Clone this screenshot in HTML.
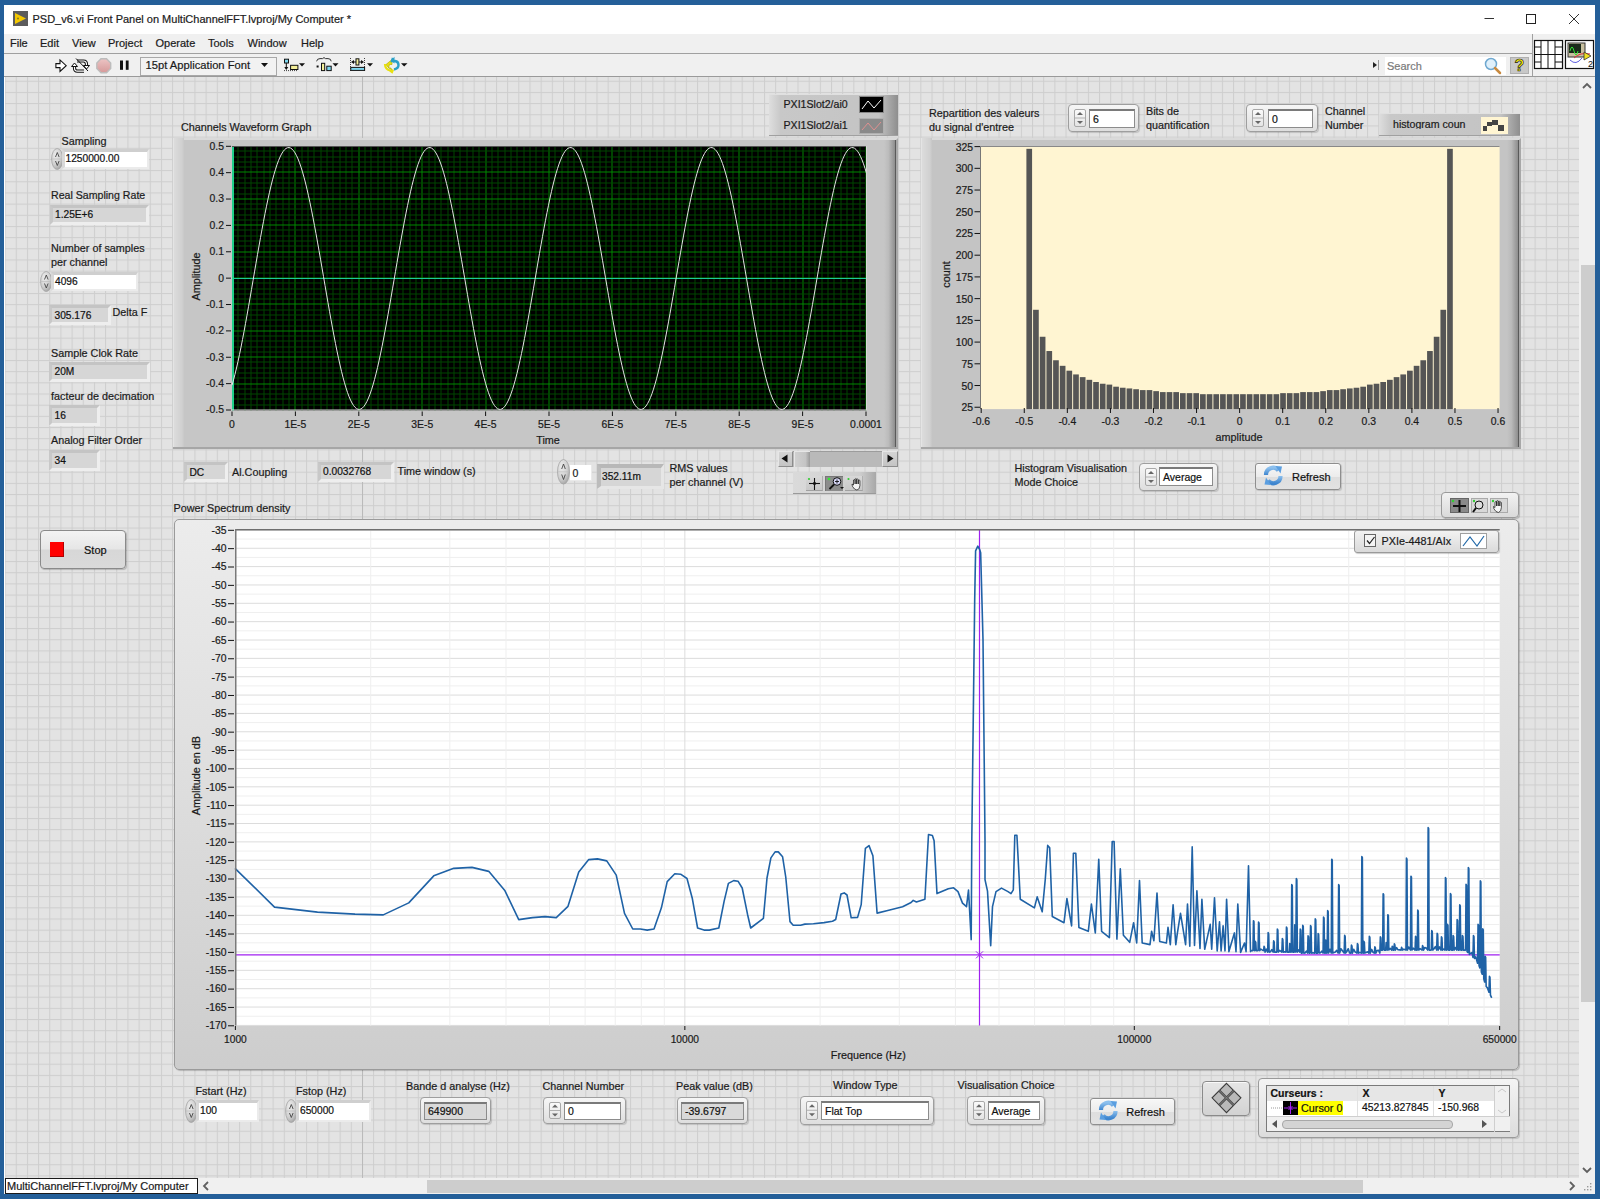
<!DOCTYPE html><html><head><meta charset="utf-8"><style>
html,body{margin:0;padding:0;}
body{width:1600px;height:1199px;overflow:hidden;position:relative;background:#245f99;font-family:"Liberation Sans", sans-serif;}
.t{position:absolute;white-space:nowrap;line-height:1;-webkit-text-stroke:0.2px currentColor;}
.r{position:absolute;box-sizing:border-box;}
svg{position:absolute;overflow:visible;}
</style></head><body>
<div class="r" style="left:4.00px;top:5.00px;width:1591.00px;height:1189.00px;background:#ffffff;"></div>
<div class="r" style="left:13.00px;top:11.00px;width:15.00px;height:15.00px;background:#5c5c5c;"></div>
<svg style="left:13px;top:11px" width="15" height="15"><path d="M2 2 L13 7.5 L2 13 Z" fill="#f4c800"/><circle cx="5" cy="7.5" r="1" fill="#8a7a20"/></svg>
<div class="t" style="left:32.50px;top:13.69px;font-size:11px;color:#202020;">PSD_v6.vi Front Panel on MultiChannelFFT.lvproj/My Computer *</div>
<svg style="left:1480px;top:10px" width="110" height="18"><line x1="4.5" y1="8.5" x2="14" y2="8.5" stroke="#333" stroke-width="1"/><rect x="46.5" y="4.5" width="9" height="9" fill="none" stroke="#222" stroke-width="1"/><line x1="89" y1="4" x2="99" y2="14" stroke="#333" stroke-width="1"/><line x1="99" y1="4" x2="89" y2="14" stroke="#333" stroke-width="1"/></svg>
<div class="r" style="left:4.00px;top:34.00px;width:1591.00px;height:19.00px;background:#f0f0f0;"></div>
<div class="t" style="left:10.00px;top:37.69px;font-size:11px;color:#1a1a1a;">File</div>
<div class="t" style="left:40.00px;top:37.69px;font-size:11px;color:#1a1a1a;">Edit</div>
<div class="t" style="left:72.00px;top:37.69px;font-size:11px;color:#1a1a1a;">View</div>
<div class="t" style="left:108.00px;top:37.69px;font-size:11px;color:#1a1a1a;">Project</div>
<div class="t" style="left:155.50px;top:37.69px;font-size:11px;color:#1a1a1a;">Operate</div>
<div class="t" style="left:208.00px;top:37.69px;font-size:11px;color:#1a1a1a;">Tools</div>
<div class="t" style="left:247.50px;top:37.69px;font-size:11px;color:#1a1a1a;">Window</div>
<div class="t" style="left:301.00px;top:37.69px;font-size:11px;color:#1a1a1a;">Help</div>
<div class="r" style="left:4.00px;top:53.00px;width:1528.00px;height:1.00px;background:#a0a0a0;"></div>
<div class="r" style="left:4.00px;top:54.00px;width:1591.00px;height:22.00px;background:#f0f0f0;"></div>
<div class="r" style="left:1532.00px;top:34.00px;width:1.00px;height:42.00px;background:#a0a0a0;"></div>
<div class="r" style="left:4.00px;top:76.00px;width:1591.00px;height:1.00px;background:#9a9a9a;"></div>
<svg style="left:50px;top:56px" width="82" height="20">
<defs><linearGradient id="stopg" x1="0" y1="0" x2="0" y2="1"><stop offset="0" stop-color="#ecc4c4"/><stop offset="1" stop-color="#d69a9a"/></linearGradient></defs>
<path d="M5.9 7.6 H10 V3.9 L16.2 9.7 L10 15.4 V11.6 H5.9 Z" fill="#fff" stroke="#111" stroke-width="1.1" stroke-linejoin="miter"/>
<path d="M27 5 H33.5 Q36.5 5 36.5 8.5 V9.5" fill="none" stroke="#111" stroke-width="3.2"/>
<path d="M27 5 H33.5 Q36.5 5 36.5 8.5 V9.5" fill="none" stroke="#fff" stroke-width="1.2"/>
<path d="M33.5 9.5 H39.5 L36.5 13 Z" fill="#fff" stroke="#111" stroke-width="1"/>
<path d="M34 15.2 H27.5 Q24.5 15.2 24.5 12 V10.5" fill="none" stroke="#111" stroke-width="3.2"/>
<path d="M34 15.2 H27.5 Q24.5 15.2 24.5 12 V10.5" fill="none" stroke="#fff" stroke-width="1.2"/>
<path d="M21.5 10.5 H27.5 L24.5 7 Z" fill="#fff" stroke="#111" stroke-width="1"/>
<line x1="26" y1="2.5" x2="38" y2="15" stroke="#111" stroke-width="1"/>
<path d="M51 2.8 H56.5 L60.7 7 V12.5 L56.5 16.7 H51 L46.8 12.5 V7 Z" fill="url(#stopg)" stroke="#bdbdbd" stroke-width="1.4"/>
<rect x="70" y="4.5" width="3" height="9.3" fill="#111"/><rect x="75.8" y="4.5" width="2.8" height="9.3" fill="#111"/>
</svg>
<div class="r" style="left:140.00px;top:56.50px;width:137.00px;height:19.00px;background:#f2f2f2;border:1px solid #a8a8a8;"></div>
<div class="t" style="left:145.60px;top:59.72px;font-size:11.2px;color:#1a1a1a;">15pt Application Font</div>
<svg style="left:260px;top:62px" width="10" height="8"><path d="M1 1 h7 l-3.5 4 z" fill="#111"/></svg>
<svg style="left:280px;top:56px" width="130" height="20">
<rect x="4.5" y="3.2" width="4" height="3.8" fill="#7fd8f0" stroke="#111" stroke-width="1"/>
<line x1="6.3" y1="7" x2="6.3" y2="13" stroke="#111" stroke-width="1"/><path d="M4.3 11 L6.3 14 L8.3 11 Z" fill="#111"/>
<rect x="10.6" y="9.3" width="7.3" height="4.2" fill="#f5f09a" stroke="#111" stroke-width="1"/>
<line x1="4" y1="14.6" x2="18" y2="14.6" stroke="#111" stroke-width="0.8" stroke-dasharray="1,1"/>
<path d="M19 7.3 H25 L22 10.6 Z" fill="#111"/>
<path d="M36.6 5.3 Q37 2.6 40 2.6 H42.5 L44 1.6 L45.5 2.6 H48 Q51 2.6 51.2 5.3" fill="none" stroke="#333" stroke-width="1"/>
<rect x="36.6" y="9.5" width="2" height="2" fill="#111"/>
<rect x="41.5" y="7.3" width="3.2" height="7.3" fill="#f5f09a" stroke="#111" stroke-width="1"/>
<rect x="46.8" y="10.2" width="4.4" height="4.4" fill="#7fd8f0" stroke="#111" stroke-width="1"/>
<path d="M52.5 7.3 H58.5 L55.5 10.6 Z" fill="#111"/>
<rect x="76" y="2.8" width="2.9" height="6.2" fill="#f5f09a" stroke="#111" stroke-width="1"/>
<path d="M71 6 L74 4 V8 Z M84 6 L81 4 V8 Z" fill="#111"/><line x1="74" y1="6" x2="76" y2="6" stroke="#111"/><line x1="79" y1="6" x2="81" y2="6" stroke="#111"/>
<line x1="70.5" y1="2" x2="70.5" y2="15" stroke="#111" stroke-width="0.8" stroke-dasharray="1,1"/><line x1="84.5" y1="2" x2="84.5" y2="15" stroke="#111" stroke-width="0.8" stroke-dasharray="1,1"/>
<rect x="70.8" y="11.4" width="13.8" height="3" fill="#7fd8f0" stroke="#111" stroke-width="1"/>
<path d="M87 7.3 H93 L90 10.6 Z" fill="#111"/>
<path d="M112 3.5 L106 8.5 L107 10 L112 14.5 L111 12 H108.5 L109.5 8.5 H112 Z" fill="#e8e010" stroke="#b0a800" stroke-width="0.6"/>
<path d="M105 8 Q105 13 110 14.5 L112 16 L113 13.5" fill="none" stroke="#e8e010" stroke-width="2.2"/>
<path d="M113 2 L112 5 L115 5 Q118.5 5.5 118.5 9 Q118.5 12.5 114 13.5" fill="none" stroke="#2aa0c8" stroke-width="2.4"/>
<path d="M110.8 4.5 L114.5 0.8 V7.5 Z" fill="#2aa0c8"/>
<path d="M121 7.3 H127.5 L124.2 10.6 Z" fill="#111"/>
</svg>
<svg style="left:1372px;top:60px" width="8" height="10"><path d="M1 2 l4 3 l-4 3z" fill="#222"/><line x1="6.5" y1="0" x2="6.5" y2="10" stroke="#999"/></svg>
<div class="r" style="left:1385.00px;top:56.50px;width:121.00px;height:18.00px;background:#ffffff;"></div>
<div class="t" style="left:1387.00px;top:60.69px;font-size:11px;color:#7a7a7a;">Search</div>
<svg style="left:1483px;top:56px" width="20" height="20"><circle cx="8" cy="8" r="5.5" fill="#dff0fb" stroke="#6fa8d0" stroke-width="1.5"/><line x1="12" y1="12" x2="17" y2="17" stroke="#c88a40" stroke-width="2.5" stroke-linecap="round"/></svg>
<div class="r" style="left:1510.00px;top:57.00px;width:19.00px;height:17.00px;background:#c8c8c8;border:1px solid #b0b0b0;"></div>
<div class="t" style="left:1514.50px;top:57.96px;font-size:16px;color:#fff000;font-weight:bold;-webkit-text-stroke:0.7px #222;">?</div>
<svg style="left:1534px;top:40px" width="62" height="30">
<rect x="0.5" y="0.5" width="28" height="28" fill="#fff" stroke="#111" stroke-width="1.2"/>
<line x1="7" y1="0" x2="7" y2="29" stroke="#111"/><line x1="14" y1="0" x2="14" y2="29" stroke="#111"/><line x1="21" y1="0" x2="21" y2="29" stroke="#111"/>
<line x1="0" y1="14.5" x2="29" y2="14.5" stroke="#111"/>
<line x1="0" y1="7" x2="7" y2="7" stroke="#111"/><line x1="0" y1="22" x2="7" y2="22" stroke="#111"/>
<line x1="21" y1="7" x2="29" y2="7" stroke="#111"/><line x1="21" y1="22" x2="29" y2="22" stroke="#111"/>
<rect x="31.5" y="0.5" width="28" height="28" fill="#fff" stroke="#111" stroke-width="1.2"/>
<rect x="34" y="3" width="17" height="14" fill="#c8c0a0" stroke="#333"/>
<rect x="35" y="4" width="12" height="9" fill="#1a2a1a"/>
<path d="M36 11 q2 -8 4 0 q2 8 4 0" fill="none" stroke="#30e030" stroke-width="1"/>
<path d="M36 20 q6 6 12 -2" fill="none" stroke="#6060e0" stroke-width="1"/>
<path d="M40 18 q6 -6 16 -4" fill="none" stroke="#e03030" stroke-width="1"/>
<path d="M50 12 l7 4 l-7 4z" fill="#f0e020" stroke="#333" stroke-width="0.8"/>
<text x="54" y="27" font-size="9" font-family="Liberation Sans" fill="#111">2</text>
</svg>
<svg style="left:5px;top:77px" width="1574" height="1101">
<defs><pattern id="grid" patternUnits="userSpaceOnUse" x="-0.418" y="3.750" width="11.168" height="11.17">
<rect width="11.168" height="11.17" fill="#e3e3e3"/>
<rect x="0" y="0" width="1" height="11.17" fill="#cecece"/>
<rect x="0" y="0" width="11.168" height="1" fill="#cecece"/>
</pattern></defs>
<rect width="1574" height="1101" fill="url(#grid)"/>
<rect x="357" y="0" width="1" height="1101" fill="#bababa"/>
</svg>
<div class="r" style="left:1579.00px;top:77.00px;width:16.00px;height:1101.00px;background:#f0f0f0;"></div>
<div class="r" style="left:1580.50px;top:265.00px;width:14.00px;height:737.00px;background:#cdcdcd;"></div>
<svg style="left:1581px;top:80px" width="12" height="12"><path d="M2 8 l4 -4 l4 4" fill="none" stroke="#606060" stroke-width="1.8"/></svg>
<svg style="left:1581px;top:1164px" width="12" height="12"><path d="M2 4 l4 4 l4 -4" fill="none" stroke="#606060" stroke-width="1.8"/></svg>
<div class="r" style="left:4.00px;top:1178.00px;width:1591.00px;height:16.00px;background:#f0f0f0;"></div>
<div class="r" style="left:427.00px;top:1180.00px;width:935.50px;height:13.00px;background:#cdcdcd;"></div>
<svg style="left:1583px;top:1182px" width="10" height="10"><rect x="7" y="1" width="1.4" height="1.4" fill="#999"/><rect x="4" y="4" width="1.4" height="1.4" fill="#999"/><rect x="7" y="4" width="1.4" height="1.4" fill="#999"/><rect x="1" y="7" width="1.4" height="1.4" fill="#999"/><rect x="4" y="7" width="1.4" height="1.4" fill="#999"/><rect x="7" y="7" width="1.4" height="1.4" fill="#999"/></svg>
<svg style="left:200px;top:1180px" width="12" height="12"><path d="M8 2 l-4 4 l4 4" fill="none" stroke="#606060" stroke-width="1.8"/></svg>
<svg style="left:1566px;top:1180px" width="12" height="12"><path d="M4 2 l4 4 l-4 4" fill="none" stroke="#606060" stroke-width="1.8"/></svg>
<div class="r" style="left:5.00px;top:1178.00px;width:193.00px;height:16.00px;background:#ffffff;border:1px solid #1a1a1a;"></div>
<div class="t" style="left:7.00px;top:1181.19px;font-size:11px;color:#1a1a1a;">MultiChannelFFT.lvproj/My Computer</div>
<div class="r" style="left:173.00px;top:138.00px;width:725.00px;height:311.00px;background:#c6c6c6;border-top:2px solid #dadada;border-bottom:2px solid #a6a6a6;border-right:2px solid #a8a8a8;"></div>
<div class="r" style="left:173.00px;top:138.00px;width:11.00px;height:309.00px;background:linear-gradient(90deg,#dcdcdc,#d0d0d0 80%,#c8c8c8);border-left:1px solid #e4e4e4;"></div>
<div class="r" style="left:884.00px;top:140.00px;width:12.00px;height:307.00px;background:linear-gradient(90deg,#c6c6c6,#bcbcbc 40%,#8e8e8e);border-right:1px solid #5a5a5a;"></div>
<svg style="left:231.5px;top:145.5px" width="635.0" height="264.5"><rect width="635.0" height="264.5" fill="#000"/><line x1="6.00" y1="0" x2="6.00" y2="264.5" stroke="#004600" stroke-width="1"/><line x1="13.00" y1="0" x2="13.00" y2="264.5" stroke="#004600" stroke-width="1"/><line x1="19.00" y1="0" x2="19.00" y2="264.5" stroke="#004600" stroke-width="1"/><line x1="25.00" y1="0" x2="25.00" y2="264.5" stroke="#004600" stroke-width="1"/><line x1="32.00" y1="0" x2="32.00" y2="264.5" stroke="#004600" stroke-width="1"/><line x1="38.00" y1="0" x2="38.00" y2="264.5" stroke="#004600" stroke-width="1"/><line x1="44.00" y1="0" x2="44.00" y2="264.5" stroke="#004600" stroke-width="1"/><line x1="51.00" y1="0" x2="51.00" y2="264.5" stroke="#004600" stroke-width="1"/><line x1="57.00" y1="0" x2="57.00" y2="264.5" stroke="#004600" stroke-width="1"/><line x1="63.00" y1="0" x2="63.00" y2="264.5" stroke="#008800" stroke-width="1"/><line x1="70.00" y1="0" x2="70.00" y2="264.5" stroke="#004600" stroke-width="1"/><line x1="76.00" y1="0" x2="76.00" y2="264.5" stroke="#004600" stroke-width="1"/><line x1="82.00" y1="0" x2="82.00" y2="264.5" stroke="#004600" stroke-width="1"/><line x1="89.00" y1="0" x2="89.00" y2="264.5" stroke="#004600" stroke-width="1"/><line x1="95.00" y1="0" x2="95.00" y2="264.5" stroke="#004600" stroke-width="1"/><line x1="101.00" y1="0" x2="101.00" y2="264.5" stroke="#004600" stroke-width="1"/><line x1="108.00" y1="0" x2="108.00" y2="264.5" stroke="#004600" stroke-width="1"/><line x1="114.00" y1="0" x2="114.00" y2="264.5" stroke="#004600" stroke-width="1"/><line x1="120.00" y1="0" x2="120.00" y2="264.5" stroke="#004600" stroke-width="1"/><line x1="127.00" y1="0" x2="127.00" y2="264.5" stroke="#008800" stroke-width="1"/><line x1="133.00" y1="0" x2="133.00" y2="264.5" stroke="#004600" stroke-width="1"/><line x1="139.00" y1="0" x2="139.00" y2="264.5" stroke="#004600" stroke-width="1"/><line x1="146.00" y1="0" x2="146.00" y2="264.5" stroke="#004600" stroke-width="1"/><line x1="152.00" y1="0" x2="152.00" y2="264.5" stroke="#004600" stroke-width="1"/><line x1="159.00" y1="0" x2="159.00" y2="264.5" stroke="#004600" stroke-width="1"/><line x1="165.00" y1="0" x2="165.00" y2="264.5" stroke="#004600" stroke-width="1"/><line x1="171.00" y1="0" x2="171.00" y2="264.5" stroke="#004600" stroke-width="1"/><line x1="178.00" y1="0" x2="178.00" y2="264.5" stroke="#004600" stroke-width="1"/><line x1="184.00" y1="0" x2="184.00" y2="264.5" stroke="#004600" stroke-width="1"/><line x1="190.00" y1="0" x2="190.00" y2="264.5" stroke="#008800" stroke-width="1"/><line x1="197.00" y1="0" x2="197.00" y2="264.5" stroke="#004600" stroke-width="1"/><line x1="203.00" y1="0" x2="203.00" y2="264.5" stroke="#004600" stroke-width="1"/><line x1="209.00" y1="0" x2="209.00" y2="264.5" stroke="#004600" stroke-width="1"/><line x1="216.00" y1="0" x2="216.00" y2="264.5" stroke="#004600" stroke-width="1"/><line x1="222.00" y1="0" x2="222.00" y2="264.5" stroke="#004600" stroke-width="1"/><line x1="228.00" y1="0" x2="228.00" y2="264.5" stroke="#004600" stroke-width="1"/><line x1="235.00" y1="0" x2="235.00" y2="264.5" stroke="#004600" stroke-width="1"/><line x1="241.00" y1="0" x2="241.00" y2="264.5" stroke="#004600" stroke-width="1"/><line x1="247.00" y1="0" x2="247.00" y2="264.5" stroke="#004600" stroke-width="1"/><line x1="254.00" y1="0" x2="254.00" y2="264.5" stroke="#008800" stroke-width="1"/><line x1="260.00" y1="0" x2="260.00" y2="264.5" stroke="#004600" stroke-width="1"/><line x1="266.00" y1="0" x2="266.00" y2="264.5" stroke="#004600" stroke-width="1"/><line x1="273.00" y1="0" x2="273.00" y2="264.5" stroke="#004600" stroke-width="1"/><line x1="279.00" y1="0" x2="279.00" y2="264.5" stroke="#004600" stroke-width="1"/><line x1="285.00" y1="0" x2="285.00" y2="264.5" stroke="#004600" stroke-width="1"/><line x1="292.00" y1="0" x2="292.00" y2="264.5" stroke="#004600" stroke-width="1"/><line x1="298.00" y1="0" x2="298.00" y2="264.5" stroke="#004600" stroke-width="1"/><line x1="304.00" y1="0" x2="304.00" y2="264.5" stroke="#004600" stroke-width="1"/><line x1="311.00" y1="0" x2="311.00" y2="264.5" stroke="#004600" stroke-width="1"/><line x1="317.00" y1="0" x2="317.00" y2="264.5" stroke="#008800" stroke-width="1"/><line x1="323.00" y1="0" x2="323.00" y2="264.5" stroke="#004600" stroke-width="1"/><line x1="330.00" y1="0" x2="330.00" y2="264.5" stroke="#004600" stroke-width="1"/><line x1="336.00" y1="0" x2="336.00" y2="264.5" stroke="#004600" stroke-width="1"/><line x1="342.00" y1="0" x2="342.00" y2="264.5" stroke="#004600" stroke-width="1"/><line x1="349.00" y1="0" x2="349.00" y2="264.5" stroke="#004600" stroke-width="1"/><line x1="355.00" y1="0" x2="355.00" y2="264.5" stroke="#004600" stroke-width="1"/><line x1="361.00" y1="0" x2="361.00" y2="264.5" stroke="#004600" stroke-width="1"/><line x1="368.00" y1="0" x2="368.00" y2="264.5" stroke="#004600" stroke-width="1"/><line x1="374.00" y1="0" x2="374.00" y2="264.5" stroke="#004600" stroke-width="1"/><line x1="380.00" y1="0" x2="380.00" y2="264.5" stroke="#008800" stroke-width="1"/><line x1="387.00" y1="0" x2="387.00" y2="264.5" stroke="#004600" stroke-width="1"/><line x1="393.00" y1="0" x2="393.00" y2="264.5" stroke="#004600" stroke-width="1"/><line x1="399.00" y1="0" x2="399.00" y2="264.5" stroke="#004600" stroke-width="1"/><line x1="406.00" y1="0" x2="406.00" y2="264.5" stroke="#004600" stroke-width="1"/><line x1="412.00" y1="0" x2="412.00" y2="264.5" stroke="#004600" stroke-width="1"/><line x1="418.00" y1="0" x2="418.00" y2="264.5" stroke="#004600" stroke-width="1"/><line x1="425.00" y1="0" x2="425.00" y2="264.5" stroke="#004600" stroke-width="1"/><line x1="431.00" y1="0" x2="431.00" y2="264.5" stroke="#004600" stroke-width="1"/><line x1="437.00" y1="0" x2="437.00" y2="264.5" stroke="#004600" stroke-width="1"/><line x1="444.00" y1="0" x2="444.00" y2="264.5" stroke="#008800" stroke-width="1"/><line x1="450.00" y1="0" x2="450.00" y2="264.5" stroke="#004600" stroke-width="1"/><line x1="456.00" y1="0" x2="456.00" y2="264.5" stroke="#004600" stroke-width="1"/><line x1="463.00" y1="0" x2="463.00" y2="264.5" stroke="#004600" stroke-width="1"/><line x1="469.00" y1="0" x2="469.00" y2="264.5" stroke="#004600" stroke-width="1"/><line x1="476.00" y1="0" x2="476.00" y2="264.5" stroke="#004600" stroke-width="1"/><line x1="482.00" y1="0" x2="482.00" y2="264.5" stroke="#004600" stroke-width="1"/><line x1="488.00" y1="0" x2="488.00" y2="264.5" stroke="#004600" stroke-width="1"/><line x1="495.00" y1="0" x2="495.00" y2="264.5" stroke="#004600" stroke-width="1"/><line x1="501.00" y1="0" x2="501.00" y2="264.5" stroke="#004600" stroke-width="1"/><line x1="507.00" y1="0" x2="507.00" y2="264.5" stroke="#008800" stroke-width="1"/><line x1="514.00" y1="0" x2="514.00" y2="264.5" stroke="#004600" stroke-width="1"/><line x1="520.00" y1="0" x2="520.00" y2="264.5" stroke="#004600" stroke-width="1"/><line x1="526.00" y1="0" x2="526.00" y2="264.5" stroke="#004600" stroke-width="1"/><line x1="533.00" y1="0" x2="533.00" y2="264.5" stroke="#004600" stroke-width="1"/><line x1="539.00" y1="0" x2="539.00" y2="264.5" stroke="#004600" stroke-width="1"/><line x1="545.00" y1="0" x2="545.00" y2="264.5" stroke="#004600" stroke-width="1"/><line x1="552.00" y1="0" x2="552.00" y2="264.5" stroke="#004600" stroke-width="1"/><line x1="558.00" y1="0" x2="558.00" y2="264.5" stroke="#004600" stroke-width="1"/><line x1="564.00" y1="0" x2="564.00" y2="264.5" stroke="#004600" stroke-width="1"/><line x1="571.00" y1="0" x2="571.00" y2="264.5" stroke="#008800" stroke-width="1"/><line x1="577.00" y1="0" x2="577.00" y2="264.5" stroke="#004600" stroke-width="1"/><line x1="583.00" y1="0" x2="583.00" y2="264.5" stroke="#004600" stroke-width="1"/><line x1="590.00" y1="0" x2="590.00" y2="264.5" stroke="#004600" stroke-width="1"/><line x1="596.00" y1="0" x2="596.00" y2="264.5" stroke="#004600" stroke-width="1"/><line x1="602.00" y1="0" x2="602.00" y2="264.5" stroke="#004600" stroke-width="1"/><line x1="609.00" y1="0" x2="609.00" y2="264.5" stroke="#004600" stroke-width="1"/><line x1="615.00" y1="0" x2="615.00" y2="264.5" stroke="#004600" stroke-width="1"/><line x1="621.00" y1="0" x2="621.00" y2="264.5" stroke="#004600" stroke-width="1"/><line x1="628.00" y1="0" x2="628.00" y2="264.5" stroke="#004600" stroke-width="1"/><line x1="634.00" y1="0" x2="634.00" y2="264.5" stroke="#008800" stroke-width="1"/><line x1="0" y1="5.00" x2="635.0" y2="5.00" stroke="#004600" stroke-width="1"/><line x1="0" y1="11.00" x2="635.0" y2="11.00" stroke="#004600" stroke-width="1"/><line x1="0" y1="16.00" x2="635.0" y2="16.00" stroke="#004600" stroke-width="1"/><line x1="0" y1="21.00" x2="635.0" y2="21.00" stroke="#004600" stroke-width="1"/><line x1="0" y1="26.00" x2="635.0" y2="26.00" stroke="#008800" stroke-width="1"/><line x1="0" y1="32.00" x2="635.0" y2="32.00" stroke="#004600" stroke-width="1"/><line x1="0" y1="37.00" x2="635.0" y2="37.00" stroke="#004600" stroke-width="1"/><line x1="0" y1="42.00" x2="635.0" y2="42.00" stroke="#004600" stroke-width="1"/><line x1="0" y1="48.00" x2="635.0" y2="48.00" stroke="#004600" stroke-width="1"/><line x1="0" y1="53.00" x2="635.0" y2="53.00" stroke="#008800" stroke-width="1"/><line x1="0" y1="58.00" x2="635.0" y2="58.00" stroke="#004600" stroke-width="1"/><line x1="0" y1="63.00" x2="635.0" y2="63.00" stroke="#004600" stroke-width="1"/><line x1="0" y1="69.00" x2="635.0" y2="69.00" stroke="#004600" stroke-width="1"/><line x1="0" y1="74.00" x2="635.0" y2="74.00" stroke="#004600" stroke-width="1"/><line x1="0" y1="79.00" x2="635.0" y2="79.00" stroke="#008800" stroke-width="1"/><line x1="0" y1="84.00" x2="635.0" y2="84.00" stroke="#004600" stroke-width="1"/><line x1="0" y1="90.00" x2="635.0" y2="90.00" stroke="#004600" stroke-width="1"/><line x1="0" y1="95.00" x2="635.0" y2="95.00" stroke="#004600" stroke-width="1"/><line x1="0" y1="100.00" x2="635.0" y2="100.00" stroke="#004600" stroke-width="1"/><line x1="0" y1="106.00" x2="635.0" y2="106.00" stroke="#008800" stroke-width="1"/><line x1="0" y1="111.00" x2="635.0" y2="111.00" stroke="#004600" stroke-width="1"/><line x1="0" y1="116.00" x2="635.0" y2="116.00" stroke="#004600" stroke-width="1"/><line x1="0" y1="121.00" x2="635.0" y2="121.00" stroke="#004600" stroke-width="1"/><line x1="0" y1="127.00" x2="635.0" y2="127.00" stroke="#004600" stroke-width="1"/><line x1="0" y1="132.00" x2="635.0" y2="132.00" stroke="#008800" stroke-width="1"/><line x1="0" y1="137.00" x2="635.0" y2="137.00" stroke="#004600" stroke-width="1"/><line x1="0" y1="143.00" x2="635.0" y2="143.00" stroke="#004600" stroke-width="1"/><line x1="0" y1="148.00" x2="635.0" y2="148.00" stroke="#004600" stroke-width="1"/><line x1="0" y1="153.00" x2="635.0" y2="153.00" stroke="#004600" stroke-width="1"/><line x1="0" y1="158.00" x2="635.0" y2="158.00" stroke="#008800" stroke-width="1"/><line x1="0" y1="164.00" x2="635.0" y2="164.00" stroke="#004600" stroke-width="1"/><line x1="0" y1="169.00" x2="635.0" y2="169.00" stroke="#004600" stroke-width="1"/><line x1="0" y1="174.00" x2="635.0" y2="174.00" stroke="#004600" stroke-width="1"/><line x1="0" y1="180.00" x2="635.0" y2="180.00" stroke="#004600" stroke-width="1"/><line x1="0" y1="185.00" x2="635.0" y2="185.00" stroke="#008800" stroke-width="1"/><line x1="0" y1="190.00" x2="635.0" y2="190.00" stroke="#004600" stroke-width="1"/><line x1="0" y1="195.00" x2="635.0" y2="195.00" stroke="#004600" stroke-width="1"/><line x1="0" y1="201.00" x2="635.0" y2="201.00" stroke="#004600" stroke-width="1"/><line x1="0" y1="206.00" x2="635.0" y2="206.00" stroke="#004600" stroke-width="1"/><line x1="0" y1="211.00" x2="635.0" y2="211.00" stroke="#008800" stroke-width="1"/><line x1="0" y1="216.00" x2="635.0" y2="216.00" stroke="#004600" stroke-width="1"/><line x1="0" y1="222.00" x2="635.0" y2="222.00" stroke="#004600" stroke-width="1"/><line x1="0" y1="227.00" x2="635.0" y2="227.00" stroke="#004600" stroke-width="1"/><line x1="0" y1="232.00" x2="635.0" y2="232.00" stroke="#004600" stroke-width="1"/><line x1="0" y1="238.00" x2="635.0" y2="238.00" stroke="#008800" stroke-width="1"/><line x1="0" y1="243.00" x2="635.0" y2="243.00" stroke="#004600" stroke-width="1"/><line x1="0" y1="248.00" x2="635.0" y2="248.00" stroke="#004600" stroke-width="1"/><line x1="0" y1="253.00" x2="635.0" y2="253.00" stroke="#004600" stroke-width="1"/><line x1="0" y1="259.00" x2="635.0" y2="259.00" stroke="#004600" stroke-width="1"/><line x1="0" y1="132.50" x2="635.0" y2="132.50" stroke="#1fc89a" stroke-width="1.2"/><line x1="1" y1="0" x2="1" y2="264.5" stroke="#1fd08a" stroke-width="2"/><polyline points="0.00,239.25 1.50,233.95 3.00,228.19 4.50,222.00 6.00,215.41 7.50,208.45 9.00,201.15 10.50,193.54 12.00,185.66 13.50,177.54 15.00,169.23 16.50,160.74 18.00,152.13 19.50,143.44 21.00,134.69 22.50,125.93 24.00,117.21 25.50,108.55 27.00,100.00 28.50,91.59 30.00,83.37 31.50,75.37 33.00,67.62 34.50,60.16 36.00,53.03 37.50,46.25 39.00,39.86 40.50,33.88 42.00,28.34 43.50,23.27 45.00,18.69 46.50,14.61 48.00,11.07 49.50,8.06 51.00,5.62 52.50,3.74 54.00,2.44 55.50,1.71 57.00,1.58 58.50,2.03 60.00,3.06 61.50,4.67 63.00,6.85 64.50,9.60 66.00,12.89 67.50,16.72 69.00,21.07 70.50,25.92 72.00,31.24 73.50,37.01 75.00,43.22 76.50,49.82 78.00,56.79 79.50,64.10 81.00,71.72 82.50,79.61 84.00,87.73 85.50,96.05 87.00,104.54 88.50,113.16 90.00,121.86 91.50,130.60 93.00,139.36 94.50,148.08 96.00,156.74 97.50,165.28 99.00,173.69 100.50,181.90 102.00,189.90 103.50,197.63 105.00,205.08 106.50,212.20 108.00,218.97 109.50,225.35 111.00,231.31 112.50,236.83 114.00,241.89 115.50,246.46 117.00,250.51 118.50,254.04 120.00,257.03 121.50,259.45 123.00,261.31 124.50,262.60 126.00,263.30 127.50,263.42 129.00,262.95 130.50,261.90 132.00,260.27 133.50,258.06 135.00,255.30 136.50,251.99 138.00,248.14 139.50,243.78 141.00,238.91 142.50,233.58 144.00,227.79 145.50,221.57 147.00,214.95 148.50,207.97 150.00,200.65 151.50,193.02 153.00,185.13 154.50,177.00 156.00,168.66 157.50,160.17 159.00,151.56 160.50,142.85 162.00,134.11 163.50,125.35 165.00,116.63 166.50,107.98 168.00,99.43 169.50,91.04 171.00,82.83 172.50,74.84 174.00,67.11 175.50,59.68 177.00,52.56 178.50,45.81 180.00,39.45 181.50,33.50 183.00,27.99 184.50,22.95 186.00,18.40 187.50,14.36 189.00,10.85 190.50,7.88 192.00,5.47 193.50,3.63 195.00,2.37 196.50,1.69 198.00,1.59 199.50,2.08 201.00,3.15 202.50,4.80 204.00,7.02 205.50,9.80 207.00,13.13 208.50,17.00 210.00,21.38 211.50,26.26 213.00,31.61 214.50,37.41 216.00,43.64 217.50,50.27 219.00,57.27 220.50,64.60 222.00,72.23 223.50,80.14 225.00,88.28 226.50,96.62 228.00,105.11 229.50,113.73 231.00,122.44 232.50,131.19 234.00,139.94 235.50,148.66 237.00,157.31 238.50,165.85 240.00,174.24 241.50,182.44 243.00,190.42 244.50,198.14 246.00,205.57 247.50,212.67 249.00,219.41 250.50,225.76 252.00,231.70 253.50,237.19 255.00,242.21 256.50,246.74 258.00,250.76 259.50,254.26 261.00,257.21 262.50,259.60 264.00,261.42 265.50,262.66 267.00,263.33 268.50,263.40 270.00,262.90 271.50,261.81 273.00,260.14 274.50,257.90 276.00,255.10 277.50,251.75 279.00,247.87 280.50,243.47 282.00,238.57 283.50,233.20 285.00,227.38 286.50,221.14 288.00,214.50 289.50,207.49 291.00,200.15 292.50,192.51 294.00,184.59 295.50,176.45 297.00,168.10 298.50,159.60 300.00,150.98 301.50,142.27 303.00,133.52 304.50,124.77 306.00,116.05 307.50,107.40 309.00,98.87 310.50,90.48 312.00,82.29 313.50,74.32 315.00,66.61 316.50,59.19 318.00,52.10 319.50,45.37 321.00,39.04 322.50,33.11 324.00,27.64 325.50,22.63 327.00,18.11 328.50,14.11 330.00,10.64 331.50,7.71 333.00,5.33 334.50,3.53 336.00,2.31 337.50,1.66 339.00,1.60 340.50,2.13 342.00,3.24 343.50,4.93 345.00,7.19 346.50,10.01 348.00,13.37 349.50,17.27 351.00,21.69 352.50,26.60 354.00,31.98 355.50,37.82 357.00,44.07 358.50,50.73 360.00,57.75 361.50,65.10 363.00,72.75 364.50,80.68 366.00,88.83 367.50,97.18 369.00,105.68 370.50,114.31 372.00,123.02 373.50,131.77 375.00,140.52 376.50,149.24 378.00,157.88 379.50,166.41 381.00,174.79 382.50,182.98 384.00,190.94 385.50,198.65 387.00,206.05 388.50,213.13 390.00,219.84 391.50,226.17 393.00,232.08 394.50,237.54 396.00,242.53 397.50,247.03 399.00,251.01 400.50,254.47 402.00,257.38 403.50,259.74 405.00,261.52 406.50,262.73 408.00,263.35 409.50,263.39 411.00,262.84 412.50,261.71 414.00,260.01 415.50,257.73 417.00,254.89 418.50,251.51 420.00,247.59 421.50,243.16 423.00,238.23 424.50,232.83 426.00,226.98 427.50,220.71 429.00,214.04 430.50,207.01 432.00,199.65 433.50,191.99 435.00,184.06 436.50,175.90 438.00,167.54 439.50,159.03 441.00,150.40 442.50,141.69 444.00,132.94 445.50,124.18 447.00,115.47 448.50,106.83 450.00,98.30 451.50,89.93 453.00,81.75 454.50,73.80 456.00,66.10 457.50,58.71 459.00,51.64 460.50,44.94 462.00,38.63 463.50,32.74 465.00,27.29 466.50,22.31 468.00,17.83 469.50,13.86 471.00,10.42 472.50,7.53 474.00,5.20 475.50,3.43 477.00,2.24 478.50,1.64 480.00,1.62 481.50,2.19 483.00,3.33 484.50,5.06 486.00,7.36 487.50,10.21 489.00,13.62 490.50,17.55 492.00,22.00 493.50,26.94 495.00,32.36 496.50,38.22 498.00,44.51 499.50,51.18 501.00,58.23 502.50,65.60 504.00,73.27 505.50,81.21 507.00,89.38 508.50,97.74 510.00,106.26 511.50,114.89 513.00,123.60 514.50,132.35 516.00,141.11 517.50,149.82 519.00,158.46 520.50,166.98 522.00,175.34 523.50,183.52 525.00,191.47 526.50,199.15 528.00,206.53 529.50,213.59 531.00,220.28 532.50,226.58 534.00,232.45 535.50,237.88 537.00,242.84 538.50,247.31 540.00,251.26 541.50,254.68 543.00,257.56 544.50,259.87 546.00,261.62 547.50,262.79 549.00,263.37 550.50,263.37 552.00,262.79 553.50,261.62 555.00,259.87 556.50,257.56 558.00,254.68 559.50,251.26 561.00,247.31 562.50,242.84 564.00,237.88 565.50,232.45 567.00,226.58 568.50,220.28 570.00,213.59 571.50,206.53 573.00,199.15 574.50,191.47 576.00,183.52 577.50,175.34 579.00,166.98 580.50,158.46 582.00,149.82 583.50,141.11 585.00,132.35 586.50,123.60 588.00,114.89 589.50,106.26 591.00,97.74 592.50,89.38 594.00,81.21 595.50,73.27 597.00,65.60 598.50,58.23 600.00,51.18 601.50,44.51 603.00,38.22 604.50,32.36 606.00,26.94 607.50,22.00 609.00,17.55 610.50,13.62 612.00,10.21 613.50,7.36 615.00,5.06 616.50,3.33 618.00,2.19 619.50,1.62 621.00,1.64 622.50,2.24 624.00,3.43 625.50,5.20 627.00,7.53 628.50,10.42 630.00,13.86 631.50,17.83 633.00,22.31 634.50,27.29" fill="none" stroke="#e4e4e4" stroke-width="1.0"/><line x1="0" y1="0.5" x2="635.0" y2="0.5" stroke="#555" stroke-width="1"/><line x1="634.5" y1="0" x2="634.5" y2="264.5" stroke="#d8d8d8" stroke-width="1"/><line x1="0" y1="264.0" x2="635.0" y2="264.0" stroke="#d8d8d8" stroke-width="1"/></svg>
<div class="t" style="left:224.00px;top:141.70px;font-size:10.4px;color:#1a1a1a;transform:translateX(-100%);">0.5</div>
<div class="t" style="left:224.00px;top:168.07px;font-size:10.4px;color:#1a1a1a;transform:translateX(-100%);">0.4</div>
<div class="t" style="left:224.00px;top:194.44px;font-size:10.4px;color:#1a1a1a;transform:translateX(-100%);">0.3</div>
<div class="t" style="left:224.00px;top:220.81px;font-size:10.4px;color:#1a1a1a;transform:translateX(-100%);">0.2</div>
<div class="t" style="left:224.00px;top:247.18px;font-size:10.4px;color:#1a1a1a;transform:translateX(-100%);">0.1</div>
<div class="t" style="left:224.00px;top:273.55px;font-size:10.4px;color:#1a1a1a;transform:translateX(-100%);">0</div>
<div class="t" style="left:224.00px;top:299.92px;font-size:10.4px;color:#1a1a1a;transform:translateX(-100%);">-0.1</div>
<div class="t" style="left:224.00px;top:326.29px;font-size:10.4px;color:#1a1a1a;transform:translateX(-100%);">-0.2</div>
<div class="t" style="left:224.00px;top:352.66px;font-size:10.4px;color:#1a1a1a;transform:translateX(-100%);">-0.3</div>
<div class="t" style="left:224.00px;top:379.03px;font-size:10.4px;color:#1a1a1a;transform:translateX(-100%);">-0.4</div>
<div class="t" style="left:224.00px;top:405.40px;font-size:10.4px;color:#1a1a1a;transform:translateX(-100%);">-0.5</div>
<div class="t" style="left:232.00px;top:420.00px;font-size:10.4px;color:#1a1a1a;transform:translateX(-50%);">0</div>
<div class="t" style="left:295.40px;top:420.00px;font-size:10.4px;color:#1a1a1a;transform:translateX(-50%);">1E-5</div>
<div class="t" style="left:358.80px;top:420.00px;font-size:10.4px;color:#1a1a1a;transform:translateX(-50%);">2E-5</div>
<div class="t" style="left:422.20px;top:420.00px;font-size:10.4px;color:#1a1a1a;transform:translateX(-50%);">3E-5</div>
<div class="t" style="left:485.60px;top:420.00px;font-size:10.4px;color:#1a1a1a;transform:translateX(-50%);">4E-5</div>
<div class="t" style="left:549.00px;top:420.00px;font-size:10.4px;color:#1a1a1a;transform:translateX(-50%);">5E-5</div>
<div class="t" style="left:612.40px;top:420.00px;font-size:10.4px;color:#1a1a1a;transform:translateX(-50%);">6E-5</div>
<div class="t" style="left:675.80px;top:420.00px;font-size:10.4px;color:#1a1a1a;transform:translateX(-50%);">7E-5</div>
<div class="t" style="left:739.20px;top:420.00px;font-size:10.4px;color:#1a1a1a;transform:translateX(-50%);">8E-5</div>
<div class="t" style="left:802.60px;top:420.00px;font-size:10.4px;color:#1a1a1a;transform:translateX(-50%);">9E-5</div>
<div class="t" style="left:866.00px;top:420.00px;font-size:10.4px;color:#1a1a1a;transform:translateX(-50%);">0.0001</div>
<svg style="left:0;top:0" width="1" height="1"><line x1="226" y1="146.30" x2="231" y2="146.30" stroke="#111" stroke-width="1"/><line x1="226" y1="172.67" x2="231" y2="172.67" stroke="#111" stroke-width="1"/><line x1="226" y1="199.04" x2="231" y2="199.04" stroke="#111" stroke-width="1"/><line x1="226" y1="225.41" x2="231" y2="225.41" stroke="#111" stroke-width="1"/><line x1="226" y1="251.78" x2="231" y2="251.78" stroke="#111" stroke-width="1"/><line x1="226" y1="278.15" x2="231" y2="278.15" stroke="#111" stroke-width="1"/><line x1="226" y1="304.52" x2="231" y2="304.52" stroke="#111" stroke-width="1"/><line x1="226" y1="330.89" x2="231" y2="330.89" stroke="#111" stroke-width="1"/><line x1="226" y1="357.26" x2="231" y2="357.26" stroke="#111" stroke-width="1"/><line x1="226" y1="383.63" x2="231" y2="383.63" stroke="#111" stroke-width="1"/><line x1="226" y1="410.00" x2="231" y2="410.00" stroke="#111" stroke-width="1"/><line x1="232.00" y1="411.5" x2="232.00" y2="416" stroke="#111" stroke-width="1"/><line x1="295.40" y1="411.5" x2="295.40" y2="416" stroke="#111" stroke-width="1"/><line x1="358.80" y1="411.5" x2="358.80" y2="416" stroke="#111" stroke-width="1"/><line x1="422.20" y1="411.5" x2="422.20" y2="416" stroke="#111" stroke-width="1"/><line x1="485.60" y1="411.5" x2="485.60" y2="416" stroke="#111" stroke-width="1"/><line x1="549.00" y1="411.5" x2="549.00" y2="416" stroke="#111" stroke-width="1"/><line x1="612.40" y1="411.5" x2="612.40" y2="416" stroke="#111" stroke-width="1"/><line x1="675.80" y1="411.5" x2="675.80" y2="416" stroke="#111" stroke-width="1"/><line x1="739.20" y1="411.5" x2="739.20" y2="416" stroke="#111" stroke-width="1"/><line x1="802.60" y1="411.5" x2="802.60" y2="416" stroke="#111" stroke-width="1"/><line x1="866.00" y1="411.5" x2="866.00" y2="416" stroke="#111" stroke-width="1"/></svg>
<div class="t" style="left:548.00px;top:435.36px;font-size:10.8px;color:#1a1a1a;transform:translateX(-50%);">Time</div>
<div class="t" style="left:199.00px;top:268.86px;font-size:10.8px;color:#1a1a1a;transform:translate(-50%,0) rotate(-90deg);transform-origin:50% 70%;">Amplitude</div>
<div class="t" style="left:181.00px;top:121.86px;font-size:10.8px;color:#1b1b1b;">Channels Waveform Graph</div>
<div class="r" style="left:769.00px;top:94.00px;width:129.00px;height:42.00px;background:linear-gradient(90deg,#dedede,#c8c8c8 9%,#c4c4c4 85%,#8e8e8e);border-top:1px solid #e0e0e0;border-bottom:1px solid #a0a0a0;"></div>
<div class="t" style="left:783.50px;top:98.53px;font-size:10.6px;color:#1a1a1a;">PXI1Slot2/ai0</div>
<div class="t" style="left:783.50px;top:120.03px;font-size:10.6px;color:#1a1a1a;">PXI1Slot2/ai1</div>
<div class="r" style="left:859.00px;top:96.00px;width:25.00px;height:17.00px;background:#000;border:1px solid #888;"></div>
<svg style="left:859px;top:96px" width="25" height="17"><path d="M3 13 L9 5 L15 12 L22 4" fill="none" stroke="#fff" stroke-width="1"/></svg>
<div class="r" style="left:859.00px;top:118.00px;width:25.00px;height:16.00px;background:#8a8a8a;border:1px solid #b0b0b0;"></div>
<svg style="left:859px;top:118px" width="25" height="16"><path d="M3 12 L9 5 L15 12 L22 4" fill="none" stroke="#e09090" stroke-width="1"/></svg>
<div class="r" style="left:778.00px;top:451.00px;width:119.00px;height:15.50px;background:#b9b9b9;border-top:1px solid #9c9c9c;"></div>
<div class="r" style="left:778.00px;top:451.00px;width:15.00px;height:15.50px;background:linear-gradient(#d4d4d4,#c4c4c4);border-top:1px solid #e6e6e6;border-left:1px solid #e6e6e6;border-bottom:1px solid #8c8c8c;border-right:1px solid #8c8c8c;"></div>
<div class="r" style="left:793.50px;top:451.00px;width:16.00px;height:15.50px;background:linear-gradient(90deg,#d0d0d0,#c4c4c4 70%,#9a9a9a);border-top:1px solid #e6e6e6;border-left:1px solid #e6e6e6;"></div>
<div class="r" style="left:882.00px;top:451.00px;width:15.50px;height:15.50px;background:linear-gradient(#d4d4d4,#c4c4c4);border-top:1px solid #e6e6e6;border-left:1px solid #e6e6e6;border-bottom:1px solid #8c8c8c;border-right:1px solid #8c8c8c;"></div>
<svg style="left:778px;top:451px" width="120" height="15"><path d="M9.5 3.5 l-6 4 l6 4z" fill="#111"/><path d="M109.5 3.5 l6 4 l-6 4z" fill="#111"/></svg>
<div class="r" style="left:793.00px;top:472.20px;width:83.00px;height:21.60px;background:linear-gradient(90deg,#dadada,#cfcfcf 80%,#a8a8a8);border-bottom:1px solid #9a9a9a;"></div>
<div class="r" style="left:806.00px;top:476.00px;width:17.00px;height:14.50px;background:linear-gradient(#d8d8d8,#c8c8c8);border-bottom:1px solid #a0a0a0;border-right:1px solid #b0b0b0;"></div>
<div class="r" style="left:825.00px;top:476.00px;width:18.00px;height:14.50px;background:#8c8c8c;border-top:1px solid #777;border-left:1px solid #777;"></div>
<div class="r" style="left:845.40px;top:476.00px;width:17.60px;height:14.50px;background:linear-gradient(#d8d8d8,#c8c8c8);border-bottom:1px solid #a0a0a0;border-right:1px solid #b0b0b0;"></div>
<svg style="left:806px;top:476px" width="60" height="16"><line x1="3" y1="7.5" x2="14" y2="7.5" stroke="#111" stroke-width="1.1"/><line x1="8.5" y1="2" x2="8.5" y2="14" stroke="#111" stroke-width="1.1"/><circle cx="8.5" cy="7.5" r="1.3" fill="none" stroke="#111" stroke-width="0.8"/><circle cx="3" cy="3" r="1.1" fill="#3c3"/><circle cx="31" cy="5.5" r="3.8" fill="#d8d8f8" stroke="#111" stroke-width="1"/><path d="M29 5.5 h4 M31 3.5 v4" stroke="#111" stroke-width="0.9"/><line x1="28" y1="8.5" x2="23.5" y2="13" stroke="#111" stroke-width="1.8"/><path d="M34 11 h4 l-2 2z" fill="#111"/><circle cx="23" cy="3" r="1.3" fill="#3e3"/><path d="M48.5 13 q-3 -3 -2.5 -5 l1.5 1 v-5 q0.8 -1 1.6 0 v4 v-5 q0.8 -1 1.6 0 v5 v-4.5 q0.8 -1 1.6 0 v4.5 v-3.5 q0.8 -1 1.6 0 v5 q0 4 -3 4.5z" fill="#f4f4f4" stroke="#111" stroke-width="0.7"/><circle cx="42.5" cy="3" r="1.1" fill="#3c3"/></svg>
<div class="r" style="left:921.00px;top:138.00px;width:600.00px;height:311.00px;background:#c4c4c4;border-top:2px solid #dadada;border-bottom:2px solid #a6a6a6;border-right:2px solid #a8a8a8;"></div>
<div class="r" style="left:921.00px;top:138.00px;width:11.00px;height:309.00px;background:linear-gradient(90deg,#dcdcdc,#d0d0d0 80%,#c6c6c6);border-left:1px solid #e4e4e4;"></div>
<div class="r" style="left:1507.00px;top:140.00px;width:12.00px;height:307.00px;background:linear-gradient(90deg,#c4c4c4,#bababa 40%,#8e8e8e);border-right:1px solid #5a5a5a;"></div>
<svg style="left:980.0px;top:145.6px" width="519.5999999999999" height="263.1"><rect width="519.5999999999999" height="263.1" fill="#fff5d2"/><rect x="46.40" y="2.84" width="5.68" height="260.26" fill="#555555"/><rect x="53.08" y="163.79" width="5.68" height="99.31" fill="#555555"/><rect x="59.76" y="190.76" width="5.68" height="72.34" fill="#555555"/><rect x="66.43" y="205.03" width="5.68" height="58.07" fill="#555555"/><rect x="73.11" y="214.25" width="5.68" height="48.85" fill="#555555"/><rect x="79.79" y="219.82" width="5.68" height="43.28" fill="#555555"/><rect x="86.47" y="224.69" width="5.68" height="38.41" fill="#555555"/><rect x="93.15" y="228.43" width="5.68" height="34.67" fill="#555555"/><rect x="99.83" y="231.13" width="5.68" height="31.97" fill="#555555"/><rect x="106.50" y="233.83" width="5.68" height="29.27" fill="#555555"/><rect x="113.18" y="236.00" width="5.68" height="27.10" fill="#555555"/><rect x="119.86" y="237.74" width="5.68" height="25.36" fill="#555555"/><rect x="126.54" y="238.61" width="5.68" height="24.49" fill="#555555"/><rect x="133.22" y="240.70" width="5.68" height="22.40" fill="#555555"/><rect x="139.89" y="241.74" width="5.68" height="21.36" fill="#555555"/><rect x="146.57" y="242.44" width="5.68" height="20.66" fill="#555555"/><rect x="153.25" y="243.22" width="5.68" height="19.88" fill="#555555"/><rect x="159.93" y="244.09" width="5.68" height="19.01" fill="#555555"/><rect x="166.61" y="244.09" width="5.68" height="19.01" fill="#555555"/><rect x="173.28" y="245.14" width="5.68" height="17.96" fill="#555555"/><rect x="179.96" y="246.09" width="5.68" height="17.01" fill="#555555"/><rect x="186.64" y="246.09" width="5.68" height="17.01" fill="#555555"/><rect x="193.32" y="246.09" width="5.68" height="17.01" fill="#555555"/><rect x="200.00" y="247.14" width="5.68" height="15.96" fill="#555555"/><rect x="206.67" y="247.14" width="5.68" height="15.96" fill="#555555"/><rect x="213.35" y="247.14" width="5.68" height="15.96" fill="#555555"/><rect x="220.03" y="248.18" width="5.68" height="14.92" fill="#555555"/><rect x="226.71" y="248.18" width="5.68" height="14.92" fill="#555555"/><rect x="233.39" y="248.18" width="5.68" height="14.92" fill="#555555"/><rect x="240.07" y="248.18" width="5.68" height="14.92" fill="#555555"/><rect x="246.74" y="248.18" width="5.68" height="14.92" fill="#555555"/><rect x="253.42" y="248.18" width="5.68" height="14.92" fill="#555555"/><rect x="260.10" y="248.18" width="5.68" height="14.92" fill="#555555"/><rect x="266.78" y="248.18" width="5.68" height="14.92" fill="#555555"/><rect x="273.46" y="248.18" width="5.68" height="14.92" fill="#555555"/><rect x="280.13" y="248.18" width="5.68" height="14.92" fill="#555555"/><rect x="286.81" y="248.18" width="5.68" height="14.92" fill="#555555"/><rect x="293.49" y="248.18" width="5.68" height="14.92" fill="#555555"/><rect x="300.17" y="247.14" width="5.68" height="15.96" fill="#555555"/><rect x="306.85" y="247.14" width="5.68" height="15.96" fill="#555555"/><rect x="313.53" y="247.14" width="5.68" height="15.96" fill="#555555"/><rect x="320.20" y="246.09" width="5.68" height="17.01" fill="#555555"/><rect x="326.88" y="246.09" width="5.68" height="17.01" fill="#555555"/><rect x="333.56" y="246.09" width="5.68" height="17.01" fill="#555555"/><rect x="340.24" y="245.14" width="5.68" height="17.96" fill="#555555"/><rect x="346.92" y="244.09" width="5.68" height="19.01" fill="#555555"/><rect x="353.59" y="244.09" width="5.68" height="19.01" fill="#555555"/><rect x="360.27" y="243.22" width="5.68" height="19.88" fill="#555555"/><rect x="366.95" y="242.44" width="5.68" height="20.66" fill="#555555"/><rect x="373.63" y="241.74" width="5.68" height="21.36" fill="#555555"/><rect x="380.31" y="240.70" width="5.68" height="22.40" fill="#555555"/><rect x="386.98" y="238.61" width="5.68" height="24.49" fill="#555555"/><rect x="393.66" y="237.74" width="5.68" height="25.36" fill="#555555"/><rect x="400.34" y="236.00" width="5.68" height="27.10" fill="#555555"/><rect x="407.02" y="233.83" width="5.68" height="29.27" fill="#555555"/><rect x="413.70" y="231.13" width="5.68" height="31.97" fill="#555555"/><rect x="420.38" y="228.43" width="5.68" height="34.67" fill="#555555"/><rect x="427.05" y="224.69" width="5.68" height="38.41" fill="#555555"/><rect x="433.73" y="219.82" width="5.68" height="43.28" fill="#555555"/><rect x="440.41" y="214.25" width="5.68" height="48.85" fill="#555555"/><rect x="447.09" y="205.03" width="5.68" height="58.07" fill="#555555"/><rect x="453.77" y="190.76" width="5.68" height="72.34" fill="#555555"/><rect x="460.44" y="163.79" width="5.68" height="99.31" fill="#555555"/><rect x="467.12" y="2.84" width="5.68" height="260.26" fill="#555555"/><line x1="0.5" y1="0" x2="0.5" y2="263.1" stroke="#777"/><line x1="0" y1="0.5" x2="519.5999999999999" y2="0.5" stroke="#888"/></svg>
<div class="t" style="left:973.00px;top:142.60px;font-size:10.4px;color:#1a1a1a;transform:translateX(-100%);">325</div>
<div class="t" style="left:973.00px;top:164.32px;font-size:10.4px;color:#1a1a1a;transform:translateX(-100%);">300</div>
<div class="t" style="left:973.00px;top:186.04px;font-size:10.4px;color:#1a1a1a;transform:translateX(-100%);">275</div>
<div class="t" style="left:973.00px;top:207.76px;font-size:10.4px;color:#1a1a1a;transform:translateX(-100%);">250</div>
<div class="t" style="left:973.00px;top:229.48px;font-size:10.4px;color:#1a1a1a;transform:translateX(-100%);">225</div>
<div class="t" style="left:973.00px;top:251.20px;font-size:10.4px;color:#1a1a1a;transform:translateX(-100%);">200</div>
<div class="t" style="left:973.00px;top:272.92px;font-size:10.4px;color:#1a1a1a;transform:translateX(-100%);">175</div>
<div class="t" style="left:973.00px;top:294.64px;font-size:10.4px;color:#1a1a1a;transform:translateX(-100%);">150</div>
<div class="t" style="left:973.00px;top:316.36px;font-size:10.4px;color:#1a1a1a;transform:translateX(-100%);">125</div>
<div class="t" style="left:973.00px;top:338.08px;font-size:10.4px;color:#1a1a1a;transform:translateX(-100%);">100</div>
<div class="t" style="left:973.00px;top:359.80px;font-size:10.4px;color:#1a1a1a;transform:translateX(-100%);">75</div>
<div class="t" style="left:973.00px;top:381.52px;font-size:10.4px;color:#1a1a1a;transform:translateX(-100%);">50</div>
<div class="t" style="left:973.00px;top:403.24px;font-size:10.4px;color:#1a1a1a;transform:translateX(-100%);">25</div>
<div class="t" style="left:981.20px;top:416.70px;font-size:10.4px;color:#1a1a1a;transform:translateX(-50%);">-0.6</div>
<div class="t" style="left:1024.27px;top:416.70px;font-size:10.4px;color:#1a1a1a;transform:translateX(-50%);">-0.5</div>
<div class="t" style="left:1067.34px;top:416.70px;font-size:10.4px;color:#1a1a1a;transform:translateX(-50%);">-0.4</div>
<div class="t" style="left:1110.41px;top:416.70px;font-size:10.4px;color:#1a1a1a;transform:translateX(-50%);">-0.3</div>
<div class="t" style="left:1153.48px;top:416.70px;font-size:10.4px;color:#1a1a1a;transform:translateX(-50%);">-0.2</div>
<div class="t" style="left:1196.55px;top:416.70px;font-size:10.4px;color:#1a1a1a;transform:translateX(-50%);">-0.1</div>
<div class="t" style="left:1239.62px;top:416.70px;font-size:10.4px;color:#1a1a1a;transform:translateX(-50%);">0</div>
<div class="t" style="left:1282.69px;top:416.70px;font-size:10.4px;color:#1a1a1a;transform:translateX(-50%);">0.1</div>
<div class="t" style="left:1325.76px;top:416.70px;font-size:10.4px;color:#1a1a1a;transform:translateX(-50%);">0.2</div>
<div class="t" style="left:1368.83px;top:416.70px;font-size:10.4px;color:#1a1a1a;transform:translateX(-50%);">0.3</div>
<div class="t" style="left:1411.90px;top:416.70px;font-size:10.4px;color:#1a1a1a;transform:translateX(-50%);">0.4</div>
<div class="t" style="left:1454.97px;top:416.70px;font-size:10.4px;color:#1a1a1a;transform:translateX(-50%);">0.5</div>
<div class="t" style="left:1498.04px;top:416.70px;font-size:10.4px;color:#1a1a1a;transform:translateX(-50%);">0.6</div>
<svg style="left:0;top:0" width="1" height="1"><line x1="974.5" y1="146.60" x2="980" y2="146.60" stroke="#111"/><line x1="974.5" y1="168.32" x2="980" y2="168.32" stroke="#111"/><line x1="974.5" y1="190.04" x2="980" y2="190.04" stroke="#111"/><line x1="974.5" y1="211.76" x2="980" y2="211.76" stroke="#111"/><line x1="974.5" y1="233.48" x2="980" y2="233.48" stroke="#111"/><line x1="974.5" y1="255.20" x2="980" y2="255.20" stroke="#111"/><line x1="974.5" y1="276.92" x2="980" y2="276.92" stroke="#111"/><line x1="974.5" y1="298.64" x2="980" y2="298.64" stroke="#111"/><line x1="974.5" y1="320.36" x2="980" y2="320.36" stroke="#111"/><line x1="974.5" y1="342.08" x2="980" y2="342.08" stroke="#111"/><line x1="974.5" y1="363.80" x2="980" y2="363.80" stroke="#111"/><line x1="974.5" y1="385.52" x2="980" y2="385.52" stroke="#111"/><line x1="974.5" y1="407.24" x2="980" y2="407.24" stroke="#111"/><line x1="981.20" y1="408" x2="981.20" y2="413" stroke="#111"/><line x1="1024.27" y1="408" x2="1024.27" y2="413" stroke="#111"/><line x1="1067.34" y1="408" x2="1067.34" y2="413" stroke="#111"/><line x1="1110.41" y1="408" x2="1110.41" y2="413" stroke="#111"/><line x1="1153.48" y1="408" x2="1153.48" y2="413" stroke="#111"/><line x1="1196.55" y1="408" x2="1196.55" y2="413" stroke="#111"/><line x1="1239.62" y1="408" x2="1239.62" y2="413" stroke="#111"/><line x1="1282.69" y1="408" x2="1282.69" y2="413" stroke="#111"/><line x1="1325.76" y1="408" x2="1325.76" y2="413" stroke="#111"/><line x1="1368.83" y1="408" x2="1368.83" y2="413" stroke="#111"/><line x1="1411.90" y1="408" x2="1411.90" y2="413" stroke="#111"/><line x1="1454.97" y1="408" x2="1454.97" y2="413" stroke="#111"/><line x1="1498.04" y1="408" x2="1498.04" y2="413" stroke="#111"/></svg>
<div class="t" style="left:1239.00px;top:431.86px;font-size:10.8px;color:#1a1a1a;transform:translateX(-50%);">amplitude</div>
<div class="t" style="left:949.00px;top:266.86px;font-size:10.8px;color:#1a1a1a;transform:translate(-50%,0) rotate(-90deg);transform-origin:50% 70%;">count</div>
<div class="r" style="left:1379.00px;top:113.00px;width:141.00px;height:23.00px;background:linear-gradient(90deg,#dedede,#c8c8c8 8%,#c4c4c4 86%,#8e8e8e);border-top:1px solid #e0e0e0;border-bottom:1px solid #a0a0a0;"></div>
<div class="t" style="left:1393.00px;top:118.53px;font-size:10.6px;color:#1a1a1a;width:78px;overflow:hidden;">histogram coun</div>
<div class="r" style="left:1481.00px;top:117.00px;width:27.00px;height:17.00px;background:#fff5d2;"></div>
<svg style="left:1481px;top:117px" width="27" height="17"><rect x="2" y="9" width="4" height="5" fill="#444"/><rect x="6" y="5" width="5" height="4" fill="#444"/><rect x="11" y="3" width="6" height="5" fill="#444"/><rect x="17" y="8" width="6" height="6" fill="#444"/></svg>
<div class="t" style="left:173.50px;top:502.86px;font-size:10.8px;color:#1b1b1b;">Power Spectrum density</div>
<div class="r" style="left:174.00px;top:518.50px;width:1345.00px;height:551.50px;border-radius:5px;background:linear-gradient(#ececec 0%,#dddddd 50%,#cdcdcd 100%);border:1px solid #9a9a9a;box-shadow:1px 1px 1px rgba(0,0,0,0.2);"></div>
<svg style="left:235.0px;top:529.4px" width="1264.7" height="496.6"><rect width="1264.7" height="496.6" fill="#ffffff"/><line x1="0" y1="0.90" x2="1264.7" y2="0.90" stroke="#dcdcdc" stroke-width="1"/><line x1="0" y1="10.08" x2="1264.7" y2="10.08" stroke="#efefef" stroke-width="1"/><line x1="0" y1="19.25" x2="1264.7" y2="19.25" stroke="#dcdcdc" stroke-width="1"/><line x1="0" y1="28.43" x2="1264.7" y2="28.43" stroke="#efefef" stroke-width="1"/><line x1="0" y1="37.60" x2="1264.7" y2="37.60" stroke="#dcdcdc" stroke-width="1"/><line x1="0" y1="46.78" x2="1264.7" y2="46.78" stroke="#efefef" stroke-width="1"/><line x1="0" y1="55.96" x2="1264.7" y2="55.96" stroke="#dcdcdc" stroke-width="1"/><line x1="0" y1="65.13" x2="1264.7" y2="65.13" stroke="#efefef" stroke-width="1"/><line x1="0" y1="74.31" x2="1264.7" y2="74.31" stroke="#dcdcdc" stroke-width="1"/><line x1="0" y1="83.48" x2="1264.7" y2="83.48" stroke="#efefef" stroke-width="1"/><line x1="0" y1="92.66" x2="1264.7" y2="92.66" stroke="#dcdcdc" stroke-width="1"/><line x1="0" y1="101.84" x2="1264.7" y2="101.84" stroke="#efefef" stroke-width="1"/><line x1="0" y1="111.01" x2="1264.7" y2="111.01" stroke="#dcdcdc" stroke-width="1"/><line x1="0" y1="120.19" x2="1264.7" y2="120.19" stroke="#efefef" stroke-width="1"/><line x1="0" y1="129.36" x2="1264.7" y2="129.36" stroke="#dcdcdc" stroke-width="1"/><line x1="0" y1="138.54" x2="1264.7" y2="138.54" stroke="#efefef" stroke-width="1"/><line x1="0" y1="147.71" x2="1264.7" y2="147.71" stroke="#dcdcdc" stroke-width="1"/><line x1="0" y1="156.89" x2="1264.7" y2="156.89" stroke="#efefef" stroke-width="1"/><line x1="0" y1="166.07" x2="1264.7" y2="166.07" stroke="#dcdcdc" stroke-width="1"/><line x1="0" y1="175.24" x2="1264.7" y2="175.24" stroke="#efefef" stroke-width="1"/><line x1="0" y1="184.42" x2="1264.7" y2="184.42" stroke="#dcdcdc" stroke-width="1"/><line x1="0" y1="193.59" x2="1264.7" y2="193.59" stroke="#efefef" stroke-width="1"/><line x1="0" y1="202.77" x2="1264.7" y2="202.77" stroke="#dcdcdc" stroke-width="1"/><line x1="0" y1="211.95" x2="1264.7" y2="211.95" stroke="#efefef" stroke-width="1"/><line x1="0" y1="221.12" x2="1264.7" y2="221.12" stroke="#dcdcdc" stroke-width="1"/><line x1="0" y1="230.30" x2="1264.7" y2="230.30" stroke="#efefef" stroke-width="1"/><line x1="0" y1="239.47" x2="1264.7" y2="239.47" stroke="#dcdcdc" stroke-width="1"/><line x1="0" y1="248.65" x2="1264.7" y2="248.65" stroke="#efefef" stroke-width="1"/><line x1="0" y1="257.83" x2="1264.7" y2="257.83" stroke="#dcdcdc" stroke-width="1"/><line x1="0" y1="267.00" x2="1264.7" y2="267.00" stroke="#efefef" stroke-width="1"/><line x1="0" y1="276.18" x2="1264.7" y2="276.18" stroke="#dcdcdc" stroke-width="1"/><line x1="0" y1="285.35" x2="1264.7" y2="285.35" stroke="#efefef" stroke-width="1"/><line x1="0" y1="294.53" x2="1264.7" y2="294.53" stroke="#dcdcdc" stroke-width="1"/><line x1="0" y1="303.71" x2="1264.7" y2="303.71" stroke="#efefef" stroke-width="1"/><line x1="0" y1="312.88" x2="1264.7" y2="312.88" stroke="#dcdcdc" stroke-width="1"/><line x1="0" y1="322.06" x2="1264.7" y2="322.06" stroke="#efefef" stroke-width="1"/><line x1="0" y1="331.23" x2="1264.7" y2="331.23" stroke="#dcdcdc" stroke-width="1"/><line x1="0" y1="340.41" x2="1264.7" y2="340.41" stroke="#efefef" stroke-width="1"/><line x1="0" y1="349.59" x2="1264.7" y2="349.59" stroke="#dcdcdc" stroke-width="1"/><line x1="0" y1="358.76" x2="1264.7" y2="358.76" stroke="#efefef" stroke-width="1"/><line x1="0" y1="367.94" x2="1264.7" y2="367.94" stroke="#dcdcdc" stroke-width="1"/><line x1="0" y1="377.11" x2="1264.7" y2="377.11" stroke="#efefef" stroke-width="1"/><line x1="0" y1="386.29" x2="1264.7" y2="386.29" stroke="#dcdcdc" stroke-width="1"/><line x1="0" y1="395.46" x2="1264.7" y2="395.46" stroke="#efefef" stroke-width="1"/><line x1="0" y1="404.64" x2="1264.7" y2="404.64" stroke="#dcdcdc" stroke-width="1"/><line x1="0" y1="413.82" x2="1264.7" y2="413.82" stroke="#efefef" stroke-width="1"/><line x1="0" y1="422.99" x2="1264.7" y2="422.99" stroke="#dcdcdc" stroke-width="1"/><line x1="0" y1="432.17" x2="1264.7" y2="432.17" stroke="#efefef" stroke-width="1"/><line x1="0" y1="441.34" x2="1264.7" y2="441.34" stroke="#dcdcdc" stroke-width="1"/><line x1="0" y1="450.52" x2="1264.7" y2="450.52" stroke="#efefef" stroke-width="1"/><line x1="0" y1="459.70" x2="1264.7" y2="459.70" stroke="#dcdcdc" stroke-width="1"/><line x1="0" y1="468.87" x2="1264.7" y2="468.87" stroke="#efefef" stroke-width="1"/><line x1="0" y1="478.05" x2="1264.7" y2="478.05" stroke="#dcdcdc" stroke-width="1"/><line x1="0" y1="487.22" x2="1264.7" y2="487.22" stroke="#efefef" stroke-width="1"/><line x1="0" y1="496.40" x2="1264.7" y2="496.40" stroke="#dcdcdc" stroke-width="1"/><line x1="0.40" y1="0" x2="0.40" y2="496.6" stroke="#dcdcdc" stroke-width="1"/><line x1="135.70" y1="0" x2="135.70" y2="496.6" stroke="#efefef" stroke-width="1"/><line x1="214.84" y1="0" x2="214.84" y2="496.6" stroke="#efefef" stroke-width="1"/><line x1="271.00" y1="0" x2="271.00" y2="496.6" stroke="#efefef" stroke-width="1"/><line x1="314.55" y1="0" x2="314.55" y2="496.6" stroke="#efefef" stroke-width="1"/><line x1="350.14" y1="0" x2="350.14" y2="496.6" stroke="#efefef" stroke-width="1"/><line x1="380.23" y1="0" x2="380.23" y2="496.6" stroke="#efefef" stroke-width="1"/><line x1="406.29" y1="0" x2="406.29" y2="496.6" stroke="#efefef" stroke-width="1"/><line x1="429.28" y1="0" x2="429.28" y2="496.6" stroke="#efefef" stroke-width="1"/><line x1="449.85" y1="0" x2="449.85" y2="496.6" stroke="#dcdcdc" stroke-width="1"/><line x1="585.15" y1="0" x2="585.15" y2="496.6" stroke="#efefef" stroke-width="1"/><line x1="664.29" y1="0" x2="664.29" y2="496.6" stroke="#efefef" stroke-width="1"/><line x1="720.45" y1="0" x2="720.45" y2="496.6" stroke="#efefef" stroke-width="1"/><line x1="764.00" y1="0" x2="764.00" y2="496.6" stroke="#efefef" stroke-width="1"/><line x1="799.59" y1="0" x2="799.59" y2="496.6" stroke="#efefef" stroke-width="1"/><line x1="829.68" y1="0" x2="829.68" y2="496.6" stroke="#efefef" stroke-width="1"/><line x1="855.74" y1="0" x2="855.74" y2="496.6" stroke="#efefef" stroke-width="1"/><line x1="878.73" y1="0" x2="878.73" y2="496.6" stroke="#efefef" stroke-width="1"/><line x1="899.30" y1="0" x2="899.30" y2="496.6" stroke="#dcdcdc" stroke-width="1"/><line x1="1034.60" y1="0" x2="1034.60" y2="496.6" stroke="#efefef" stroke-width="1"/><line x1="1113.74" y1="0" x2="1113.74" y2="496.6" stroke="#efefef" stroke-width="1"/><line x1="1169.90" y1="0" x2="1169.90" y2="496.6" stroke="#efefef" stroke-width="1"/><line x1="1213.45" y1="0" x2="1213.45" y2="496.6" stroke="#efefef" stroke-width="1"/><line x1="1249.04" y1="0" x2="1249.04" y2="496.6" stroke="#efefef" stroke-width="1"/><line x1="744.5" y1="0" x2="744.5" y2="496.6" stroke="#a020f0" stroke-width="1.2"/><line x1="0" y1="425.85" x2="1264.7" y2="425.85" stroke="#a020f0" stroke-width="1.2"/><path d="M741.0 422.35 L748.0 429.35 M748.0 422.35 L741.0 429.35" stroke="#a020f0" stroke-width="1"/><polyline points="0.00,339.35 39.50,378.10 82.50,383.10 120.00,385.10 148.25,385.85 173.75,373.85 198.75,346.85 218.75,339.35 237.00,338.35 253.75,342.35 270.00,361.85 283.75,390.60 297.50,388.60 310.00,387.60 321.25,388.60 333.00,377.35 343.75,343.10 353.75,330.60 362.50,329.85 371.75,331.85 381.25,346.10 389.50,384.35 397.75,400.00 405.20,400.00 412.20,401.10 419.00,400.00 426.40,378.80 432.20,352.60 439.80,344.80 445.60,345.20 452.00,349.50 457.25,369.20 462.60,399.00 469.00,401.10 474.25,401.10 483.80,399.00 489.10,372.40 493.40,354.35 498.70,351.60 503.00,352.20 507.20,359.00 512.50,385.20 515.70,399.00 528.40,389.40 532.00,349.00 535.90,328.85 540.10,322.90 543.30,322.90 547.60,327.80 550.75,348.00 555.00,392.60 558.20,396.20 565.60,396.20 569.90,395.10 578.40,394.70 589.00,393.60 597.50,392.20 600.70,390.50 606.00,365.00 609.20,363.90 612.00,366.00 616.20,388.80 622.60,388.35 626.20,375.60 630.40,319.30 634.00,316.60 637.90,326.70 642.10,384.10 652.75,381.50 667.60,377.70 676.10,373.50 678.20,371.35 681.40,373.00 689.90,370.30 693.50,305.50 697.40,306.60 699.10,311.85 702.00,364.60 713.30,359.70 718.60,358.80 723.00,362.60 727.50,374.10 731.50,377.60 733.50,361.10 736.20,410.60 736.80,310.60 739.70,70.60 740.60,21.90 742.80,17.20 744.70,20.60 745.65,23.80 748.00,110.60 750.00,310.60 750.00,350.60 752.50,362.10 755.70,416.60 757.50,377.60 761.00,362.60 766.50,359.10 773.00,362.60 776.00,364.60 778.30,360.90 779.80,306.20 781.90,306.20 785.30,370.30 799.40,378.90 802.20,367.90 807.20,382.80 810.30,350.00 812.70,316.40 814.70,318.70 817.30,387.50 829.00,393.70 831.90,369.50 836.60,396.85 838.40,324.20 840.80,324.20 843.90,398.40 853.30,402.30 856.40,375.00 860.30,403.90 863.75,330.40 866.60,402.30 874.40,408.60 877.20,312.50 879.10,312.50 881.90,410.10 885.30,339.80 888.40,406.20 894.70,413.30 898.60,393.70 901.70,414.00 904.50,351.50 907.20,414.00 915.00,415.60 916.60,402.30 918.90,411.70 922.00,364.00 924.70,412.50 931.40,414.00 933.00,398.40 935.30,415.60 938.10,375.80 940.80,415.60 942.30,404.60 945.50,384.35 947.80,398.40 950.60,415.60 952.50,375.00 954.80,417.20 957.20,317.90 959.50,416.40 961.90,361.70 965.00,419.50 966.90,370.30 969.70,420.30 975.20,395.30 976.70,420.30 979.50,368.70 982.20,421.85 984.50,392.90 986.10,421.85 988.10,396.85 990.00,421.85 991.60,370.30 993.90,422.60 999.40,403.90 1001.00,422.60 1002.80,375.00 1005.60,423.40 1009.50,414.00 1011.10,422.60 1013.50,336.85 1015.50,422.60 1016.00,421.60 1017.95,421.60 1018.45,391.70 1018.95,392.70 1019.45,421.60 1019.75,421.60 1020.25,412.30 1020.75,413.30 1021.25,421.60 1023.05,421.60 1023.55,393.10 1024.05,394.10 1024.55,421.60 1025.85,420.14 1027.15,420.92 1028.55,421.60 1029.05,417.40 1029.55,418.40 1030.05,423.10 1031.35,420.17 1032.65,423.10 1033.15,403.60 1033.65,404.60 1034.15,423.10 1035.45,422.77 1036.75,420.69 1038.15,423.10 1038.65,411.90 1039.15,412.90 1039.65,423.10 1041.85,423.10 1042.35,400.00 1042.85,401.00 1043.35,423.10 1044.65,421.45 1046.85,423.10 1047.35,409.60 1047.85,410.60 1048.35,423.10 1049.65,422.84 1050.95,423.10 1051.45,398.10 1051.95,399.10 1052.45,423.10 1054.25,423.10 1054.75,414.60 1055.25,415.60 1055.75,423.10 1056.25,423.10 1056.75,355.50 1057.25,356.50 1057.75,423.10 1059.25,423.10 1059.75,395.80 1060.25,396.80 1060.75,423.10 1060.85,423.10 1061.35,349.50 1061.85,350.50 1062.35,423.10 1063.65,420.82 1064.75,423.10 1065.25,400.00 1065.75,401.00 1066.25,424.10 1067.25,424.10 1067.75,396.30 1068.25,397.30 1068.75,424.10 1070.05,423.93 1071.35,422.15 1072.55,424.10 1073.05,406.80 1073.55,407.80 1074.05,424.10 1075.05,424.10 1075.55,396.60 1076.05,397.60 1076.55,424.10 1077.85,423.79 1079.75,424.10 1080.25,389.90 1080.75,390.90 1081.25,424.10 1082.65,424.10 1083.15,404.60 1083.65,405.60 1084.15,424.10 1085.45,423.69 1086.75,422.19 1088.05,424.10 1088.55,388.00 1089.05,389.00 1089.55,424.10 1090.25,424.10 1090.75,411.00 1091.25,412.00 1091.75,424.10 1092.15,424.10 1092.65,381.60 1093.15,382.60 1093.65,424.10 1094.95,420.38 1096.25,424.10 1096.75,330.20 1097.25,331.20 1097.75,424.10 1099.05,423.54 1100.35,423.10 1101.65,421.28 1103.15,424.10 1103.65,355.50 1104.15,356.50 1104.65,424.10 1105.95,419.84 1107.25,421.50 1109.15,424.10 1109.65,406.40 1110.15,407.40 1110.65,424.10 1111.95,422.31 1113.25,419.71 1114.55,423.89 1115.95,424.10 1116.45,416.00 1116.95,417.00 1117.45,424.10 1118.75,420.24 1120.05,422.80 1121.95,424.10 1122.45,414.60 1122.95,415.60 1123.45,424.10 1124.75,423.45 1126.35,424.10 1126.85,327.50 1127.35,328.50 1127.85,424.10 1128.35,424.10 1128.85,412.30 1129.35,413.30 1129.85,424.10 1131.15,423.57 1132.45,422.71 1133.85,424.10 1134.35,407.30 1134.85,408.30 1135.35,424.10 1136.65,420.43 1137.95,423.29 1139.35,424.10 1139.85,417.80 1140.35,418.80 1140.85,424.10 1142.15,421.48 1143.45,421.22 1144.85,424.10 1145.35,407.90 1145.85,408.90 1146.35,421.10 1147.65,421.10 1148.15,364.70 1148.65,365.70 1149.15,421.10 1150.65,421.10 1151.15,413.60 1151.65,414.60 1152.15,421.10 1152.35,421.10 1152.85,385.70 1153.35,386.70 1153.85,421.10 1155.15,419.42 1156.75,421.10 1157.25,417.20 1157.75,418.20 1158.25,421.10 1158.85,421.10 1159.35,414.90 1159.85,415.90 1160.35,421.10 1161.65,418.64 1162.95,420.82 1164.25,420.83 1166.05,421.10 1166.55,418.40 1167.05,419.40 1167.55,421.10 1168.85,420.17 1170.95,421.10 1171.45,329.10 1171.95,330.10 1172.45,421.10 1173.75,418.04 1175.45,421.10 1175.95,347.20 1176.45,348.20 1176.95,421.10 1178.25,419.18 1180.05,421.10 1180.55,407.30 1181.05,408.30 1181.55,421.10 1182.25,421.10 1182.75,381.00 1183.25,382.00 1183.75,421.10 1185.05,419.69 1187.05,421.10 1187.55,416.60 1188.05,417.60 1188.55,421.10 1189.85,418.46 1191.15,419.06 1192.65,421.10 1193.15,298.60 1193.65,299.60 1194.15,421.10 1196.25,421.10 1196.75,401.50 1197.25,402.50 1197.75,421.10 1199.05,419.75 1200.35,417.53 1201.65,421.10 1202.15,404.40 1202.65,405.40 1203.15,421.10 1204.45,417.95 1205.95,421.10 1206.45,407.90 1206.95,408.90 1207.45,421.10 1208.75,420.00 1209.95,421.10 1210.45,348.60 1210.95,349.60 1211.45,421.10 1211.95,421.10 1212.45,395.30 1212.95,396.30 1213.45,421.10 1214.95,421.10 1215.45,364.60 1215.95,365.60 1216.45,421.10 1217.65,421.10 1218.15,406.60 1218.65,407.60 1219.15,421.10 1220.45,418.52 1221.65,421.10 1222.15,390.60 1222.65,391.60 1223.15,421.10 1224.25,421.10 1224.75,375.90 1225.25,376.90 1225.75,421.10 1226.95,421.10 1227.45,406.60 1227.95,407.60 1228.45,421.10 1230.55,421.10 1231.05,355.30 1231.55,356.30 1232.05,422.46 1232.85,423.50 1233.35,338.60 1233.85,339.60 1234.35,425.45 1235.65,424.25 1236.95,423.66 1237.95,428.35 1238.45,406.60 1238.95,407.60 1239.45,429.48 1240.75,427.87 1242.55,434.17 1243.05,395.30 1243.55,396.30 1244.05,436.73 1244.85,438.87 1245.35,351.90 1245.85,352.90 1246.35,442.89 1247.25,445.29 1247.75,399.90 1248.25,400.90 1248.75,449.88 1249.65,452.98 1250.15,427.30 1250.65,428.30 1251.15,457.52 1252.45,458.87 1253.95,463.18 1254.45,447.30 1254.95,448.30 1255.45,466.14 1256.70,468.90" fill="none" stroke="#1f62a6" stroke-width="1.6" stroke-linejoin="round"/><line x1="0" y1="0.75" x2="1264.7" y2="0.75" stroke="#6e6e6e" stroke-width="1.5"/><line x1="0.75" y1="0" x2="0.75" y2="496.6" stroke="#7a7a7a" stroke-width="1.5"/></svg>
<div class="t" style="left:226.50px;top:525.70px;font-size:10.4px;color:#1a1a1a;transform:translateX(-100%);">-35</div>
<div class="t" style="left:226.50px;top:544.05px;font-size:10.4px;color:#1a1a1a;transform:translateX(-100%);">-40</div>
<div class="t" style="left:226.50px;top:562.40px;font-size:10.4px;color:#1a1a1a;transform:translateX(-100%);">-45</div>
<div class="t" style="left:226.50px;top:580.75px;font-size:10.4px;color:#1a1a1a;transform:translateX(-100%);">-50</div>
<div class="t" style="left:226.50px;top:599.10px;font-size:10.4px;color:#1a1a1a;transform:translateX(-100%);">-55</div>
<div class="t" style="left:226.50px;top:617.46px;font-size:10.4px;color:#1a1a1a;transform:translateX(-100%);">-60</div>
<div class="t" style="left:226.50px;top:635.81px;font-size:10.4px;color:#1a1a1a;transform:translateX(-100%);">-65</div>
<div class="t" style="left:226.50px;top:654.16px;font-size:10.4px;color:#1a1a1a;transform:translateX(-100%);">-70</div>
<div class="t" style="left:226.50px;top:672.51px;font-size:10.4px;color:#1a1a1a;transform:translateX(-100%);">-75</div>
<div class="t" style="left:226.50px;top:690.86px;font-size:10.4px;color:#1a1a1a;transform:translateX(-100%);">-80</div>
<div class="t" style="left:226.50px;top:709.21px;font-size:10.4px;color:#1a1a1a;transform:translateX(-100%);">-85</div>
<div class="t" style="left:226.50px;top:727.57px;font-size:10.4px;color:#1a1a1a;transform:translateX(-100%);">-90</div>
<div class="t" style="left:226.50px;top:745.92px;font-size:10.4px;color:#1a1a1a;transform:translateX(-100%);">-95</div>
<div class="t" style="left:226.50px;top:764.27px;font-size:10.4px;color:#1a1a1a;transform:translateX(-100%);">-100</div>
<div class="t" style="left:226.50px;top:782.62px;font-size:10.4px;color:#1a1a1a;transform:translateX(-100%);">-105</div>
<div class="t" style="left:226.50px;top:800.97px;font-size:10.4px;color:#1a1a1a;transform:translateX(-100%);">-110</div>
<div class="t" style="left:226.50px;top:819.33px;font-size:10.4px;color:#1a1a1a;transform:translateX(-100%);">-115</div>
<div class="t" style="left:226.50px;top:837.68px;font-size:10.4px;color:#1a1a1a;transform:translateX(-100%);">-120</div>
<div class="t" style="left:226.50px;top:856.03px;font-size:10.4px;color:#1a1a1a;transform:translateX(-100%);">-125</div>
<div class="t" style="left:226.50px;top:874.38px;font-size:10.4px;color:#1a1a1a;transform:translateX(-100%);">-130</div>
<div class="t" style="left:226.50px;top:892.73px;font-size:10.4px;color:#1a1a1a;transform:translateX(-100%);">-135</div>
<div class="t" style="left:226.50px;top:911.09px;font-size:10.4px;color:#1a1a1a;transform:translateX(-100%);">-140</div>
<div class="t" style="left:226.50px;top:929.44px;font-size:10.4px;color:#1a1a1a;transform:translateX(-100%);">-145</div>
<div class="t" style="left:226.50px;top:947.79px;font-size:10.4px;color:#1a1a1a;transform:translateX(-100%);">-150</div>
<div class="t" style="left:226.50px;top:966.14px;font-size:10.4px;color:#1a1a1a;transform:translateX(-100%);">-155</div>
<div class="t" style="left:226.50px;top:984.49px;font-size:10.4px;color:#1a1a1a;transform:translateX(-100%);">-160</div>
<div class="t" style="left:226.50px;top:1002.84px;font-size:10.4px;color:#1a1a1a;transform:translateX(-100%);">-165</div>
<div class="t" style="left:226.50px;top:1021.20px;font-size:10.4px;color:#1a1a1a;transform:translateX(-100%);">-170</div>
<div class="t" style="left:235.40px;top:1034.67px;font-size:10.2px;color:#1a1a1a;transform:translateX(-50%);">1000</div>
<div class="t" style="left:684.85px;top:1034.67px;font-size:10.2px;color:#1a1a1a;transform:translateX(-50%);">10000</div>
<div class="t" style="left:1134.30px;top:1034.67px;font-size:10.2px;color:#1a1a1a;transform:translateX(-50%);">100000</div>
<div class="t" style="left:1499.66px;top:1034.67px;font-size:10.2px;color:#1a1a1a;transform:translateX(-50%);">650000</div>
<svg style="left:0;top:0" width="1" height="1"><line x1="228" y1="530.30" x2="234" y2="530.30" stroke="#111"/><line x1="228" y1="548.65" x2="234" y2="548.65" stroke="#111"/><line x1="228" y1="567.00" x2="234" y2="567.00" stroke="#111"/><line x1="228" y1="585.36" x2="234" y2="585.36" stroke="#111"/><line x1="228" y1="603.71" x2="234" y2="603.71" stroke="#111"/><line x1="228" y1="622.06" x2="234" y2="622.06" stroke="#111"/><line x1="228" y1="640.41" x2="234" y2="640.41" stroke="#111"/><line x1="228" y1="658.76" x2="234" y2="658.76" stroke="#111"/><line x1="228" y1="677.11" x2="234" y2="677.11" stroke="#111"/><line x1="228" y1="695.47" x2="234" y2="695.47" stroke="#111"/><line x1="228" y1="713.82" x2="234" y2="713.82" stroke="#111"/><line x1="228" y1="732.17" x2="234" y2="732.17" stroke="#111"/><line x1="228" y1="750.52" x2="234" y2="750.52" stroke="#111"/><line x1="228" y1="768.87" x2="234" y2="768.87" stroke="#111"/><line x1="228" y1="787.23" x2="234" y2="787.23" stroke="#111"/><line x1="228" y1="805.58" x2="234" y2="805.58" stroke="#111"/><line x1="228" y1="823.93" x2="234" y2="823.93" stroke="#111"/><line x1="228" y1="842.28" x2="234" y2="842.28" stroke="#111"/><line x1="228" y1="860.63" x2="234" y2="860.63" stroke="#111"/><line x1="228" y1="878.99" x2="234" y2="878.99" stroke="#111"/><line x1="228" y1="897.34" x2="234" y2="897.34" stroke="#111"/><line x1="228" y1="915.69" x2="234" y2="915.69" stroke="#111"/><line x1="228" y1="934.04" x2="234" y2="934.04" stroke="#111"/><line x1="228" y1="952.39" x2="234" y2="952.39" stroke="#111"/><line x1="228" y1="970.74" x2="234" y2="970.74" stroke="#111"/><line x1="228" y1="989.10" x2="234" y2="989.10" stroke="#111"/><line x1="228" y1="1007.45" x2="234" y2="1007.45" stroke="#111"/><line x1="228" y1="1025.80" x2="234" y2="1025.80" stroke="#111"/><line x1="235.40" y1="1026" x2="235.40" y2="1030" stroke="#111"/><line x1="684.85" y1="1026" x2="684.85" y2="1030" stroke="#111"/><line x1="1134.30" y1="1026" x2="1134.30" y2="1030" stroke="#111"/><line x1="1499.66" y1="1026" x2="1499.66" y2="1030" stroke="#111"/></svg>
<div class="t" style="left:868.30px;top:1050.16px;font-size:10.8px;color:#1a1a1a;transform:translateX(-50%);">Frequence (Hz)</div>
<div class="t" style="left:199.00px;top:767.86px;font-size:10.8px;color:#1a1a1a;transform:translate(-50%,0) rotate(-90deg);transform-origin:50% 70%;">Amplitude en dB</div>
<div class="r" style="left:1353.50px;top:530.00px;width:145.00px;height:23.00px;border-radius:3px;background:linear-gradient(#f2f2f2,#dadada);border:1px solid #9a9a9a;box-shadow:1px 1px 1px rgba(0,0,0,0.2);"></div>
<div class="r" style="left:1363.50px;top:534.00px;width:12.50px;height:12.50px;background:#f4f4f4;border:1px solid #666;"></div>
<svg style="left:1363.5px;top:534px" width="13" height="13"><path d="M3 6.5 l2.5 3 l5 -6.5" fill="none" stroke="#222" stroke-width="1.2"/></svg>
<div class="t" style="left:1381.50px;top:535.86px;font-size:10.8px;color:#1a1a1a;">PXIe-4481/AIx</div>
<div class="r" style="left:1460.00px;top:532.75px;width:26.50px;height:16.50px;background:#fff;border:1px solid #a0a0a0;"></div>
<svg style="left:1460px;top:533px" width="27" height="16"><path d="M3 13 L10 4 L17 13 L24 3" fill="none" stroke="#2369a8" stroke-width="1.2"/></svg>
<div class="r" style="left:1440.50px;top:492.00px;width:78.00px;height:25.50px;border-radius:4px;background:linear-gradient(#f2f2f2,#dadada);border:1px solid #9a9a9a;box-shadow:1px 1px 1px rgba(0,0,0,0.2);"></div>
<div class="r" style="left:1450.00px;top:498.00px;width:18.50px;height:15.00px;background:#8a8a8a;border:1px solid #666;"></div>
<div class="r" style="left:1471.00px;top:498.00px;width:16.50px;height:15.00px;background:#d8d8d8;border:1px solid #aaa;"></div>
<div class="r" style="left:1490.00px;top:498.00px;width:17.50px;height:15.00px;background:#d8d8d8;border:1px solid #aaa;"></div>
<svg style="left:1450px;top:498px" width="60" height="16"><line x1="3" y1="8" x2="16" y2="8" stroke="#111" stroke-width="2"/><line x1="9.5" y1="2" x2="9.5" y2="14" stroke="#111" stroke-width="2"/><circle cx="3" cy="3" r="1.3" fill="#3c3"/><circle cx="29" cy="7" r="4" fill="#ddd" stroke="#111"/><line x1="26" y1="10" x2="23" y2="14" stroke="#111" stroke-width="2"/><circle cx="24" cy="3" r="1.2" fill="#3c3"/><path d="M46 13.5 q-3 -3 -2.5 -5 l1.5 1 v-5.5 q0.8 -1 1.6 0 v4 v-5 q0.8 -1 1.6 0 v5 v-4.5 q0.8 -1 1.6 0 v4.5 v-3.5 q0.8 -1 1.6 0 v5 q0 4 -3 5z" fill="#f4f4f4" stroke="#111" stroke-width="0.7"/><circle cx="43" cy="3" r="1.2" fill="#3c3"/></svg>
<div class="t" style="left:61.50px;top:135.86px;font-size:10.8px;color:#1b1b1b;">Sampling</div>
<svg style="left:50.5px;top:148px" width="14" height="23"><defs><radialGradient id="sg50148" cx="35%" cy="30%" r="80%"><stop offset="0" stop-color="#ececec"/><stop offset="0.6" stop-color="#cfcfcf"/><stop offset="1" stop-color="#9c9c9c"/></radialGradient></defs><ellipse cx="6.2" cy="11.0" rx="5.6" ry="10.5" fill="url(#sg50148)" stroke="#a4a4a4" stroke-width="0.8"/><line x1="1" y1="11.0" x2="11.5" y2="11.0" stroke="#b8b8b8" stroke-width="0.6"/><path d="M4.5 9.0 l1.8 -4.5 l1.8 4.5" fill="none" stroke="#444" stroke-width="0.9"/><path d="M4.5 13.0 l1.8 4.5 l1.8 -4.5" fill="none" stroke="#444" stroke-width="0.9"/></svg>
<div class="r" style="left:61.50px;top:149.00px;width:87.50px;height:20.00px;background:#f4f4f4;border-top:3px solid #cfcfcf;border-left:3px solid #d8d8d8;border-bottom:2px solid #ebebeb;border-right:2px solid #ebebeb;"></div>
<div class="r" style="left:64.50px;top:152.00px;width:82.50px;height:15.00px;background:#ffffff;"></div>
<div class="t" style="left:65.50px;top:154.37px;font-size:10.2px;color:#111;">1250000.00</div>
<div class="t" style="left:51.00px;top:190.03px;font-size:10.6px;color:#1b1b1b;">Real Sampling Rate</div>
<div class="r" style="left:49.50px;top:204.50px;width:99.50px;height:20.50px;background:#d6d6d6;border-top:3px solid #c4c4c4;border-left:3px solid #c8c8c8;border-bottom:3px solid #eeeeee;border-right:3px solid #eeeeee;"></div>
<div class="t" style="left:55.00px;top:210.42px;font-size:10.2px;color:#111;">1.25E+6</div>
<div class="t" style="left:51.00px;top:243.36px;font-size:10.8px;color:#1b1b1b;">Number of samples</div>
<div class="t" style="left:51.00px;top:257.36px;font-size:10.8px;color:#1b1b1b;">per channel</div>
<svg style="left:40px;top:271px" width="14" height="22"><defs><radialGradient id="sg40271" cx="35%" cy="30%" r="80%"><stop offset="0" stop-color="#ececec"/><stop offset="0.6" stop-color="#cfcfcf"/><stop offset="1" stop-color="#9c9c9c"/></radialGradient></defs><ellipse cx="6.2" cy="10.5" rx="5.6" ry="10.0" fill="url(#sg40271)" stroke="#a4a4a4" stroke-width="0.8"/><line x1="1" y1="10.5" x2="11.5" y2="10.5" stroke="#b8b8b8" stroke-width="0.6"/><path d="M4.5 8.5 l1.8 -4.5 l1.8 4.5" fill="none" stroke="#444" stroke-width="0.9"/><path d="M4.5 12.5 l1.8 4.5 l1.8 -4.5" fill="none" stroke="#444" stroke-width="0.9"/></svg>
<div class="r" style="left:51.00px;top:272.00px;width:87.00px;height:19.00px;background:#f4f4f4;border-top:3px solid #cfcfcf;border-left:3px solid #d8d8d8;border-bottom:2px solid #ebebeb;border-right:2px solid #ebebeb;"></div>
<div class="r" style="left:54.00px;top:275.00px;width:82.00px;height:14.00px;background:#ffffff;"></div>
<div class="t" style="left:55.00px;top:276.87px;font-size:10.2px;color:#111;">4096</div>
<div class="r" style="left:49.00px;top:305.00px;width:62.00px;height:20.00px;background:#d6d6d6;border-top:3px solid #c4c4c4;border-left:3px solid #c8c8c8;border-bottom:3px solid #eeeeee;border-right:3px solid #eeeeee;"></div>
<div class="t" style="left:54.50px;top:310.67px;font-size:10.2px;color:#111;">305.176</div>
<div class="t" style="left:112.50px;top:307.36px;font-size:10.8px;color:#1b1b1b;">Delta F</div>
<div class="t" style="left:51.00px;top:347.86px;font-size:10.8px;color:#1b1b1b;">Sample Clok Rate</div>
<div class="r" style="left:49.00px;top:362.00px;width:101.00px;height:19.50px;background:#d6d6d6;border-top:3px solid #c4c4c4;border-left:3px solid #c8c8c8;border-bottom:3px solid #eeeeee;border-right:3px solid #eeeeee;"></div>
<div class="t" style="left:54.50px;top:367.42px;font-size:10.2px;color:#111;">20M</div>
<div class="t" style="left:51.00px;top:390.86px;font-size:10.8px;color:#1b1b1b;">facteur de decimation</div>
<div class="r" style="left:49.00px;top:405.00px;width:51.00px;height:21.00px;background:#d6d6d6;border-top:3px solid #c4c4c4;border-left:3px solid #c8c8c8;border-bottom:3px solid #eeeeee;border-right:3px solid #eeeeee;"></div>
<div class="t" style="left:54.50px;top:411.17px;font-size:10.2px;color:#111;">16</div>
<div class="t" style="left:51.00px;top:434.86px;font-size:10.8px;color:#1b1b1b;">Analog Filter Order</div>
<div class="r" style="left:49.00px;top:450.00px;width:51.00px;height:20.50px;background:#d6d6d6;border-top:3px solid #c4c4c4;border-left:3px solid #c8c8c8;border-bottom:3px solid #eeeeee;border-right:3px solid #eeeeee;"></div>
<div class="t" style="left:54.50px;top:455.92px;font-size:10.2px;color:#111;">34</div>
<div class="r" style="left:40.00px;top:529.50px;width:85.50px;height:39.00px;border-radius:4px;background:linear-gradient(#f3f3f3 0%,#e6e6e6 48%,#d7d7d7 52%,#dadada 100%);border:1px solid #8a8a8a;box-shadow:1px 1px 1px rgba(0,0,0,0.2);"></div>
<div class="r" style="left:49.50px;top:542.00px;width:14.50px;height:14.50px;background:#ff0000;border-right:1px solid #b00000;border-bottom:1px solid #b00000;"></div>
<div class="t" style="left:84.00px;top:544.69px;font-size:11px;color:#111;">Stop</div>
<div class="r" style="left:184.00px;top:462.00px;width:44.00px;height:20.00px;background:#d6d6d6;border-top:3px solid #c4c4c4;border-left:3px solid #c8c8c8;border-bottom:3px solid #eeeeee;border-right:3px solid #eeeeee;"></div>
<div class="t" style="left:189.50px;top:467.67px;font-size:10.2px;color:#111;">DC</div>
<div class="t" style="left:232.00px;top:467.36px;font-size:10.8px;color:#1b1b1b;">Al.Coupling</div>
<div class="r" style="left:317.50px;top:461.50px;width:76.00px;height:20.50px;background:#d6d6d6;border-top:3px solid #c4c4c4;border-left:3px solid #c8c8c8;border-bottom:3px solid #eeeeee;border-right:3px solid #eeeeee;"></div>
<div class="t" style="left:323.00px;top:467.42px;font-size:10.2px;color:#111;">0.0032768</div>
<div class="t" style="left:397.50px;top:466.36px;font-size:10.8px;color:#1b1b1b;">Time window (s)</div>
<svg style="left:557px;top:459px" width="14" height="27"><defs><radialGradient id="sgidx" cx="35%" cy="30%" r="80%"><stop offset="0" stop-color="#ececec"/><stop offset="0.6" stop-color="#cfcfcf"/><stop offset="1" stop-color="#9c9c9c"/></radialGradient></defs><ellipse cx="6.5" cy="12.8" rx="6" ry="12.3" fill="url(#sgidx)" stroke="#a4a4a4" stroke-width="0.8"/><line x1="1" y1="12.8" x2="12" y2="12.8" stroke="#b8b8b8" stroke-width="0.6"/><path d="M4.7 10 l1.8 -5 l1.8 5" fill="none" stroke="#444" stroke-width="0.9"/><path d="M4.7 15.5 l1.8 5 l1.8 -5" fill="none" stroke="#444" stroke-width="0.9"/></svg>
<div class="r" style="left:570.00px;top:465.00px;width:22.00px;height:16.00px;background:#fff;border-bottom:1px solid #eaeaea;border-right:1px solid #eaeaea;"></div>
<div class="t" style="left:572.50px;top:468.11px;font-size:10.5px;color:#1b1b1b;">0</div>
<div class="r" style="left:596.50px;top:463.50px;width:67.50px;height:25.00px;background:#d6d6d6;border-top:3px solid #c4c4c4;border-left:3px solid #c8c8c8;border-bottom:3px solid #eeeeee;border-right:3px solid #eeeeee;"></div>
<div class="t" style="left:602.00px;top:471.67px;font-size:10.2px;color:#111;">352.11m</div>
<div class="r" style="left:596.50px;top:463.50px;width:67.50px;height:25.00px;border-top:4px solid #b8b8b8;border-left:4px solid #bcbcbc;border-bottom:3px solid #e6e6e6;border-right:3px solid #e6e6e6;"></div>
<div class="t" style="left:669.50px;top:462.86px;font-size:10.8px;color:#1b1b1b;">RMS values</div>
<div class="t" style="left:669.50px;top:476.86px;font-size:10.8px;color:#1b1b1b;">per channel (V)</div>
<div class="t" style="left:929.00px;top:108.36px;font-size:10.8px;color:#1b1b1b;">Repartition des valeurs</div>
<div class="t" style="left:929.00px;top:122.36px;font-size:10.8px;color:#1b1b1b;">du signal d'entree</div>
<div class="r" style="left:1068.00px;top:104.00px;width:71.00px;height:28.00px;border-radius:4px;background:linear-gradient(#f6f6f6,#dedede);border:1px solid #9e9e9e;box-shadow:1px 1px 1px rgba(0,0,0,0.15);"></div>
<div class="r" style="left:1074.00px;top:109.00px;width:12.00px;height:18.00px;background:linear-gradient(#fafafa,#e4e4e4);border:1px solid #a8a8a8;border-radius:2px;"></div>
<svg style="left:1074px;top:109px" width="12" height="18"><path d="M3 6.0 l3 -3 l3 3z" fill="#666"/><path d="M3 12.0 l3 3 l3 -3z" fill="#666"/><line x1="1" y1="9.0" x2="11" y2="9.0" stroke="#b0b0b0"/></svg>
<div class="r" style="left:1089.00px;top:108.50px;width:46.00px;height:19.00px;background:#ffffff;border:1px solid #8c8c8c;border-top:2px solid #7a7a7a;"></div>
<div class="t" style="left:1093.00px;top:113.61px;font-size:10.5px;color:#111;">6</div>
<div class="t" style="left:1146.00px;top:106.36px;font-size:10.8px;color:#1b1b1b;">Bits de</div>
<div class="t" style="left:1146.00px;top:119.86px;font-size:10.8px;color:#1b1b1b;">quantification</div>
<div class="r" style="left:1246.00px;top:104.00px;width:72.00px;height:28.00px;border-radius:4px;background:linear-gradient(#f6f6f6,#dedede);border:1px solid #9e9e9e;box-shadow:1px 1px 1px rgba(0,0,0,0.15);"></div>
<div class="r" style="left:1252.00px;top:109.00px;width:12.00px;height:18.00px;background:linear-gradient(#fafafa,#e4e4e4);border:1px solid #a8a8a8;border-radius:2px;"></div>
<svg style="left:1252px;top:109px" width="12" height="18"><path d="M3 6.0 l3 -3 l3 3z" fill="#666"/><path d="M3 12.0 l3 3 l3 -3z" fill="#666"/><line x1="1" y1="9.0" x2="11" y2="9.0" stroke="#b0b0b0"/></svg>
<div class="r" style="left:1268.00px;top:108.50px;width:45.00px;height:19.00px;background:#ffffff;border:1px solid #8c8c8c;border-top:2px solid #7a7a7a;"></div>
<div class="t" style="left:1272.00px;top:113.61px;font-size:10.5px;color:#111;">0</div>
<div class="t" style="left:1325.00px;top:106.36px;font-size:10.8px;color:#1b1b1b;">Channel</div>
<div class="t" style="left:1325.00px;top:119.86px;font-size:10.8px;color:#1b1b1b;">Number</div>
<div class="t" style="left:1014.50px;top:463.36px;font-size:10.8px;color:#1b1b1b;">Histogram Visualisation</div>
<div class="t" style="left:1014.50px;top:477.36px;font-size:10.8px;color:#1b1b1b;">Mode Choice</div>
<div class="r" style="left:1138.50px;top:462.50px;width:79.00px;height:28.00px;border-radius:4px;background:linear-gradient(#f6f6f6,#dedede);border:1px solid #9e9e9e;box-shadow:1px 1px 1px rgba(0,0,0,0.15);"></div>
<div class="r" style="left:1144.50px;top:467.50px;width:12.00px;height:18.00px;background:linear-gradient(#fafafa,#e4e4e4);border:1px solid #a8a8a8;border-radius:2px;"></div>
<svg style="left:1144.5px;top:467.5px" width="12" height="18"><path d="M3 6.0 l3 -3 l3 3z" fill="#666"/><path d="M3 12.0 l3 3 l3 -3z" fill="#666"/><line x1="1" y1="9.0" x2="11" y2="9.0" stroke="#b0b0b0"/></svg>
<div class="r" style="left:1159.00px;top:467.00px;width:54.00px;height:19.00px;background:#ffffff;border:1px solid #8c8c8c;border-top:2px solid #7a7a7a;"></div>
<div class="t" style="left:1163.00px;top:472.11px;font-size:10.5px;color:#111;">Average</div>
<div class="r" style="left:1255.00px;top:462.50px;width:85.50px;height:27.50px;border-radius:3px;background:linear-gradient(#f7f7f7 0%,#ececec 50%,#dedede 51%,#e2e2e2 100%);border:1px solid #8e8e8e;box-shadow:inset 0 1px 0 #fcfcfc, 1px 1px 1px rgba(0,0,0,0.15);"></div>
<svg style="left:1263px;top:465.0px" width="21" height="21"><defs><linearGradient id="rg1255" x1="0" y1="0" x2="0" y2="1"><stop offset="0" stop-color="#8cc0ee"/><stop offset="1" stop-color="#3f86cf"/></linearGradient></defs><path d="M3 10 A7 7 0 0 1 15.5 5.5" fill="none" stroke="url(#rg1255)" stroke-width="4.2"/><path d="M12.5 1 L19 1.5 L17.5 8.5 Z" fill="#5a9ee0"/><path d="M17.5 11 A7 7 0 0 1 5 15.5" fill="none" stroke="url(#rg1255)" stroke-width="4.2"/><path d="M8 20 L1.5 19.5 L3 12.5 Z" fill="#5a9ee0"/></svg>
<div class="t" style="left:1311.25px;top:472.24px;font-size:11px;color:#111;transform:translateX(-50%);">Refresh</div>
<div class="r" style="left:1089.50px;top:1097.50px;width:85.00px;height:27.00px;border-radius:3px;background:linear-gradient(#f7f7f7 0%,#ececec 50%,#dedede 51%,#e2e2e2 100%);border:1px solid #8e8e8e;box-shadow:inset 0 1px 0 #fcfcfc, 1px 1px 1px rgba(0,0,0,0.15);"></div>
<svg style="left:1097.5px;top:1100.0px" width="21" height="21"><defs><linearGradient id="rg1089" x1="0" y1="0" x2="0" y2="1"><stop offset="0" stop-color="#8cc0ee"/><stop offset="1" stop-color="#3f86cf"/></linearGradient></defs><path d="M3 10 A7 7 0 0 1 15.5 5.5" fill="none" stroke="url(#rg1089)" stroke-width="4.2"/><path d="M12.5 1 L19 1.5 L17.5 8.5 Z" fill="#5a9ee0"/><path d="M17.5 11 A7 7 0 0 1 5 15.5" fill="none" stroke="url(#rg1089)" stroke-width="4.2"/><path d="M8 20 L1.5 19.5 L3 12.5 Z" fill="#5a9ee0"/></svg>
<div class="t" style="left:1145.50px;top:1106.99px;font-size:11px;color:#111;transform:translateX(-50%);">Refresh</div>
<div class="t" style="left:195.50px;top:1086.36px;font-size:10.8px;color:#1b1b1b;">Fstart (Hz)</div>
<svg style="left:185px;top:1099px" width="14" height="25"><defs><radialGradient id="sg1851099" cx="35%" cy="30%" r="80%"><stop offset="0" stop-color="#ececec"/><stop offset="0.6" stop-color="#cfcfcf"/><stop offset="1" stop-color="#9c9c9c"/></radialGradient></defs><ellipse cx="6.2" cy="12.0" rx="5.6" ry="11.5" fill="url(#sg1851099)" stroke="#a4a4a4" stroke-width="0.8"/><line x1="1" y1="12.0" x2="11.5" y2="12.0" stroke="#b8b8b8" stroke-width="0.6"/><path d="M4.5 10.0 l1.8 -4.5 l1.8 4.5" fill="none" stroke="#444" stroke-width="0.9"/><path d="M4.5 14.0 l1.8 4.5 l1.8 -4.5" fill="none" stroke="#444" stroke-width="0.9"/></svg>
<div class="r" style="left:196.00px;top:1100.00px;width:63.00px;height:22.00px;background:#f4f4f4;border-top:3px solid #cfcfcf;border-left:3px solid #d8d8d8;border-bottom:2px solid #ebebeb;border-right:2px solid #ebebeb;"></div>
<div class="r" style="left:199.00px;top:1103.00px;width:58.00px;height:17.00px;background:#ffffff;"></div>
<div class="t" style="left:200.00px;top:1106.37px;font-size:10.2px;color:#111;">100</div>
<div class="t" style="left:296.00px;top:1086.36px;font-size:10.8px;color:#1b1b1b;">Fstop (Hz)</div>
<svg style="left:285px;top:1099px" width="14" height="25"><defs><radialGradient id="sg2851099" cx="35%" cy="30%" r="80%"><stop offset="0" stop-color="#ececec"/><stop offset="0.6" stop-color="#cfcfcf"/><stop offset="1" stop-color="#9c9c9c"/></radialGradient></defs><ellipse cx="6.2" cy="12.0" rx="5.6" ry="11.5" fill="url(#sg2851099)" stroke="#a4a4a4" stroke-width="0.8"/><line x1="1" y1="12.0" x2="11.5" y2="12.0" stroke="#b8b8b8" stroke-width="0.6"/><path d="M4.5 10.0 l1.8 -4.5 l1.8 4.5" fill="none" stroke="#444" stroke-width="0.9"/><path d="M4.5 14.0 l1.8 4.5 l1.8 -4.5" fill="none" stroke="#444" stroke-width="0.9"/></svg>
<div class="r" style="left:296.00px;top:1100.00px;width:75.00px;height:22.00px;background:#f4f4f4;border-top:3px solid #cfcfcf;border-left:3px solid #d8d8d8;border-bottom:2px solid #ebebeb;border-right:2px solid #ebebeb;"></div>
<div class="r" style="left:299.00px;top:1103.00px;width:70.00px;height:17.00px;background:#ffffff;"></div>
<div class="t" style="left:300.00px;top:1106.37px;font-size:10.2px;color:#111;">650000</div>
<div class="t" style="left:406.00px;top:1081.36px;font-size:10.8px;color:#1b1b1b;">Bande d analyse (Hz)</div>
<div class="r" style="left:420.00px;top:1097.00px;width:71.00px;height:27.00px;border-radius:4px;background:linear-gradient(#f6f6f6,#dedede);border:1px solid #9e9e9e;box-shadow:1px 1px 1px rgba(0,0,0,0.15);"></div>
<div class="r" style="left:424.00px;top:1101.50px;width:63.00px;height:18.00px;background:#d9d9d9;border:1px solid #8c8c8c;border-top:2px solid #7a7a7a;"></div>
<div class="t" style="left:428.00px;top:1106.11px;font-size:10.5px;color:#111;">649900</div>
<div class="t" style="left:542.50px;top:1080.86px;font-size:10.8px;color:#1b1b1b;">Channel Number</div>
<div class="r" style="left:542.50px;top:1097.00px;width:83.00px;height:27.00px;border-radius:4px;background:linear-gradient(#f6f6f6,#dedede);border:1px solid #9e9e9e;box-shadow:1px 1px 1px rgba(0,0,0,0.15);"></div>
<div class="r" style="left:548.50px;top:1102.00px;width:12.00px;height:17.00px;background:linear-gradient(#fafafa,#e4e4e4);border:1px solid #a8a8a8;border-radius:2px;"></div>
<svg style="left:548.5px;top:1102px" width="12" height="17"><path d="M3 5.5 l3 -3 l3 3z" fill="#666"/><path d="M3 11.5 l3 3 l3 -3z" fill="#666"/><line x1="1" y1="8.5" x2="11" y2="8.5" stroke="#b0b0b0"/></svg>
<div class="r" style="left:564.00px;top:1101.50px;width:57.00px;height:18.00px;background:#ffffff;border:1px solid #8c8c8c;border-top:2px solid #7a7a7a;"></div>
<div class="t" style="left:568.00px;top:1106.11px;font-size:10.5px;color:#111;">0</div>
<div class="t" style="left:676.00px;top:1080.86px;font-size:10.8px;color:#1b1b1b;">Peak value (dB)</div>
<div class="r" style="left:677.00px;top:1097.00px;width:71.00px;height:27.00px;border-radius:4px;background:linear-gradient(#f6f6f6,#dedede);border:1px solid #9e9e9e;box-shadow:1px 1px 1px rgba(0,0,0,0.15);"></div>
<div class="r" style="left:681.00px;top:1101.50px;width:63.00px;height:18.00px;background:#d9d9d9;border:1px solid #8c8c8c;border-top:2px solid #7a7a7a;"></div>
<div class="t" style="left:685.00px;top:1106.11px;font-size:10.5px;color:#111;">-39.6797</div>
<div class="t" style="left:833.00px;top:1080.36px;font-size:10.8px;color:#1b1b1b;">Window Type</div>
<div class="r" style="left:799.50px;top:1096.00px;width:134.00px;height:28.50px;border-radius:4px;background:linear-gradient(#f6f6f6,#dedede);border:1px solid #9e9e9e;box-shadow:1px 1px 1px rgba(0,0,0,0.15);"></div>
<div class="r" style="left:805.50px;top:1101.00px;width:12.00px;height:18.50px;background:linear-gradient(#fafafa,#e4e4e4);border:1px solid #a8a8a8;border-radius:2px;"></div>
<svg style="left:805.5px;top:1101px" width="12" height="18.5"><path d="M3 6.25 l3 -3 l3 3z" fill="#666"/><path d="M3 12.25 l3 3 l3 -3z" fill="#666"/><line x1="1" y1="9.25" x2="11" y2="9.25" stroke="#b0b0b0"/></svg>
<div class="r" style="left:821.00px;top:1100.50px;width:108.00px;height:19.50px;background:#ffffff;border:1px solid #8c8c8c;border-top:2px solid #7a7a7a;"></div>
<div class="t" style="left:825.00px;top:1105.86px;font-size:10.5px;color:#111;">Flat Top</div>
<div class="t" style="left:957.50px;top:1080.36px;font-size:10.8px;color:#1b1b1b;">Visualisation Choice</div>
<div class="r" style="left:967.00px;top:1096.00px;width:77.50px;height:28.50px;border-radius:4px;background:linear-gradient(#f6f6f6,#dedede);border:1px solid #9e9e9e;box-shadow:1px 1px 1px rgba(0,0,0,0.15);"></div>
<div class="r" style="left:973.00px;top:1101.00px;width:12.00px;height:18.50px;background:linear-gradient(#fafafa,#e4e4e4);border:1px solid #a8a8a8;border-radius:2px;"></div>
<svg style="left:973px;top:1101px" width="12" height="18.5"><path d="M3 6.25 l3 -3 l3 3z" fill="#666"/><path d="M3 12.25 l3 3 l3 -3z" fill="#666"/><line x1="1" y1="9.25" x2="11" y2="9.25" stroke="#b0b0b0"/></svg>
<div class="r" style="left:987.50px;top:1100.50px;width:52.00px;height:19.50px;background:#ffffff;border:1px solid #8c8c8c;border-top:2px solid #7a7a7a;"></div>
<div class="t" style="left:991.50px;top:1105.86px;font-size:10.5px;color:#111;">Average</div>
<div class="r" style="left:1202.30px;top:1080.50px;width:48.20px;height:35.00px;border-radius:4px;background:linear-gradient(#e6e6e6,#d2d2d2);border:1.5px solid #8a8a8a;box-shadow:inset 0 1px 0 #fafafa, 1px 1px 1px rgba(0,0,0,0.15);"></div>
<svg style="left:1210px;top:1082px" width="34" height="32"><path d="M16.5 1.3 L30.9 15.8 L16.5 30.6 L2.1 15.8 Z" fill="#b9b9b9" stroke="#3a3a3a" stroke-width="1.1"/><path d="M9.3 8.55 L23.7 23.2 M23.7 8.55 L9.3 23.2" stroke="#4a4a4a" stroke-width="2.6"/><path d="M9.3 8.55 L23.7 23.2 M23.7 8.55 L9.3 23.2" stroke="#9a9a9a" stroke-width="0.7"/></svg>
<div class="r" style="left:1257.50px;top:1077.50px;width:261.50px;height:60.00px;border-radius:4px;background:linear-gradient(#f4f4f4,#dcdcdc);border:1px solid #9a9a9a;box-shadow:1px 1px 1px rgba(0,0,0,0.15);"></div>
<div class="r" style="left:1265.50px;top:1084.50px;width:244.50px;height:47.00px;background:#ffffff;border:1px solid #7a7a7a;"></div>
<div class="r" style="left:1266.50px;top:1085.50px;width:228.00px;height:15.00px;background:#e6e6e6;"></div>
<div class="r" style="left:1494.00px;top:1085.50px;width:15.00px;height:30.00px;background:#f0f0f0;border-left:1px solid #cfcfcf;"></div>
<div class="r" style="left:1266.50px;top:1115.50px;width:243.00px;height:1.00px;background:#cfcfcf;"></div>
<div class="r" style="left:1266.50px;top:1116.50px;width:243.00px;height:14.00px;background:#f0f0f0;"></div>
<div class="r" style="left:1357.00px;top:1085.50px;width:1.00px;height:30.00px;background:#e0e0e0;"></div>
<div class="r" style="left:1433.00px;top:1085.50px;width:1.00px;height:30.00px;background:#e0e0e0;"></div>
<div class="r" style="left:1494.00px;top:1116.50px;width:1.00px;height:15.00px;background:#cfcfcf;"></div>
<div class="r" style="left:1282.00px;top:1119.50px;width:171.00px;height:9.00px;border-radius:4px;background:#d4d4d4;border:1px solid #a8a8a8;"></div>
<svg style="left:1268px;top:1117px" width="240" height="14"><path d="M9 3 l-5 4 l5 4z" fill="#555"/><path d="M214 3 l5 4 l-5 4z" fill="#555"/></svg>
<svg style="left:1496px;top:1087px" width="12" height="28"><path d="M2 5 l4 -3 l4 3" fill="none" stroke="#c8c8c8"/><path d="M2 23 l4 3 l4 -3" fill="none" stroke="#c8c8c8"/></svg>
<div class="t" style="left:1270.50px;top:1088.11px;font-size:10.5px;color:#111;font-weight:bold;">Curseurs :</div>
<div class="t" style="left:1362.50px;top:1088.11px;font-size:10.5px;color:#111;font-weight:bold;">X</div>
<div class="t" style="left:1438.50px;top:1088.11px;font-size:10.5px;color:#111;font-weight:bold;">Y</div>
<div class="r" style="left:1282.50px;top:1101.00px;width:15.00px;height:14.00px;background:#000;"></div>
<svg style="left:1282.5px;top:1101px" width="15" height="14"><line x1="7.5" y1="1" x2="7.5" y2="13" stroke="#a020f0"/><line x1="1" y1="7" x2="14" y2="7" stroke="#a020f0"/><path d="M5.5 5 l4 4 M9.5 5 l-4 4" stroke="#a020f0"/></svg>
<svg style="left:1271px;top:1104px" width="12" height="8"><line x1="0" y1="4" x2="11" y2="4" stroke="#999" stroke-dasharray="1,1"/></svg>
<div class="r" style="left:1297.50px;top:1101.00px;width:45.50px;height:14.00px;background:#ffff00;"></div>
<div class="t" style="left:1301.00px;top:1102.86px;font-size:10.8px;color:#111;">Cursor 0</div>
<div class="t" style="left:1362.00px;top:1103.20px;font-size:10.4px;color:#111;">45213.827845</div>
<div class="t" style="left:1438.00px;top:1103.20px;font-size:10.4px;color:#111;">-150.968</div>
</body></html>
